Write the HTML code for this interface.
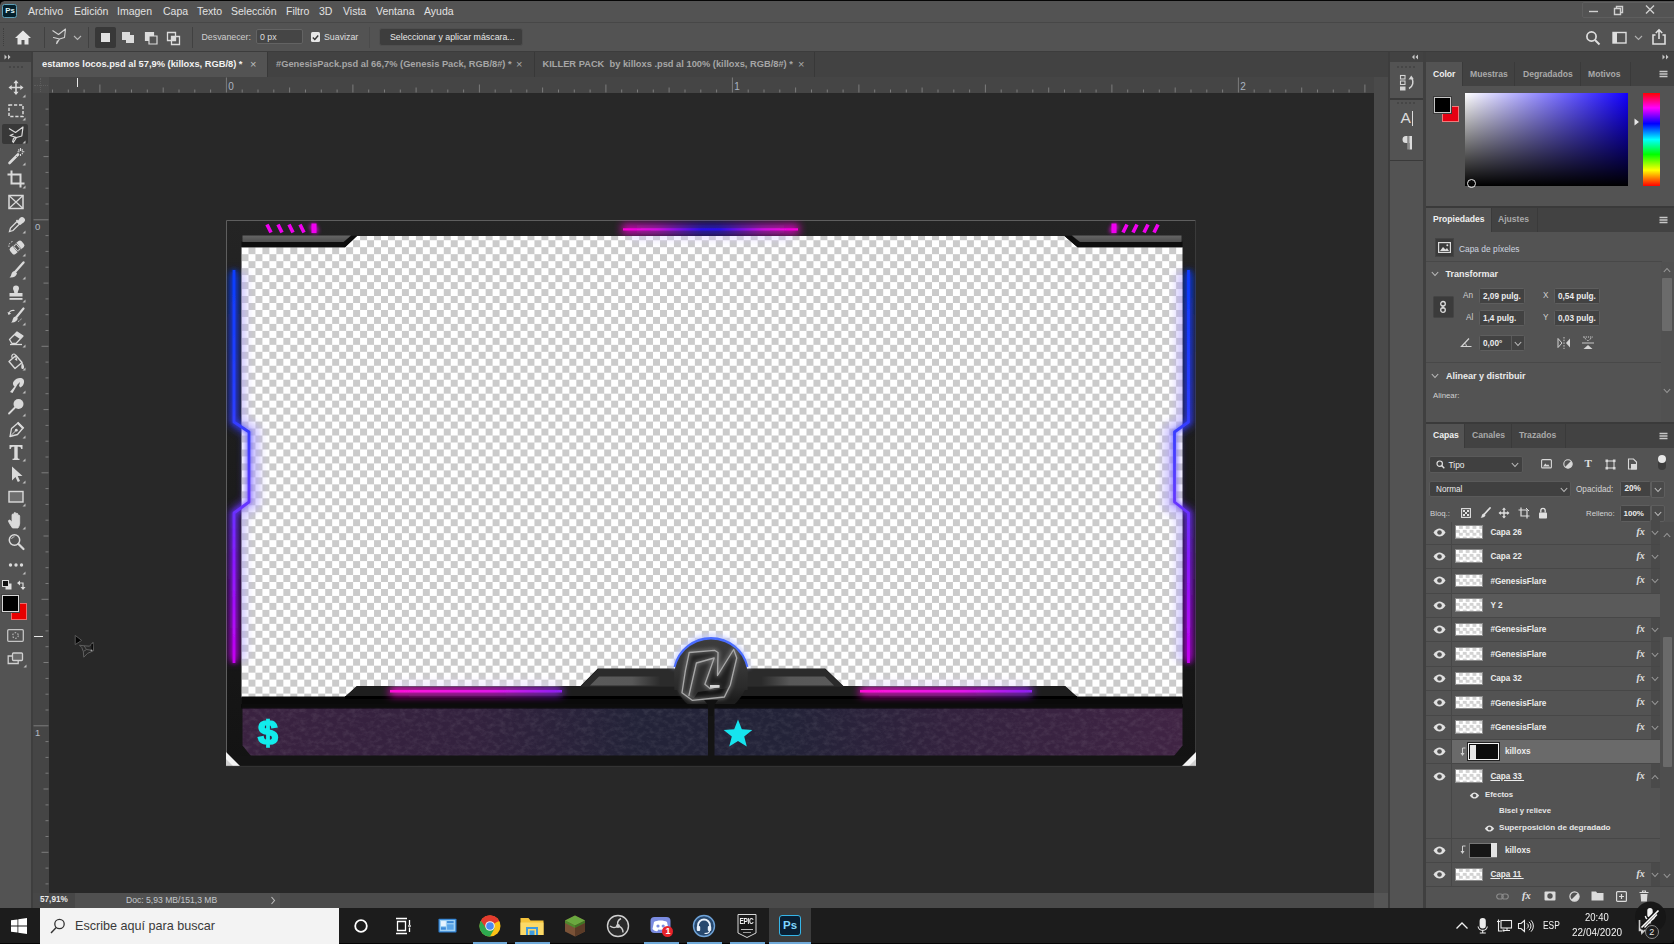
<!DOCTYPE html>
<html lang="es"><head><meta charset="utf-8"><title>Photoshop</title>
<style>
*{box-sizing:border-box;margin:0;padding:0}
html,body{width:1674px;height:944px;overflow:hidden;background:#535353;font-family:"Liberation Sans",sans-serif;color:#d8d8d8;font-size:10px}
.a{position:absolute}
.t{position:absolute;white-space:nowrap;line-height:1;transform-origin:0 0}
.b{font-weight:bold}
svg{position:absolute;overflow:visible}
#root{position:absolute;left:0;top:0;width:1674px;height:944px;overflow:hidden;background:#535353}
</style></head>
<body><div id="root">
<div class="a" style="left:0px;top:0px;width:1674px;height:23px;background:#535353;"></div>
<div class="a" style="left:0px;top:0px;width:1674px;height:1.2px;background:#050505;"></div>
<div class="a" style="left:0;top:1px;width:4px;height:4px;background:radial-gradient(circle at 100% 100%,rgba(0,0,0,0) 3.300px,#050505 4px)"></div>
<div class="a" style="left:0px;top:22px;width:1674px;height:1px;background:#474747;"></div>
<div class="a" style="left:2px;top:3.800px;width:14.500px;height:14.500px;background:#04202c;border:1.300px solid #5fa0b8;border-radius:2.500px"></div>
<div class="t" style="left:5.2px;top:7.3px;font-size:7.8px;color:#dff6fb;font-weight:bold;">Ps</div>
<div class="t" style="left:28px;top:6.4px;font-size:10.5px;color:#e2e2e2;">Archivo</div>
<div class="t" style="left:74px;top:6.4px;font-size:10.5px;color:#e2e2e2;">Edición</div>
<div class="t" style="left:117px;top:6.4px;font-size:10.5px;color:#e2e2e2;">Imagen</div>
<div class="t" style="left:163px;top:6.4px;font-size:10.5px;color:#e2e2e2;">Capa</div>
<div class="t" style="left:197px;top:6.4px;font-size:10.5px;color:#e2e2e2;">Texto</div>
<div class="t" style="left:231px;top:6.4px;font-size:10.5px;color:#e2e2e2;">Selección</div>
<div class="t" style="left:286px;top:6.4px;font-size:10.5px;color:#e2e2e2;">Filtro</div>
<div class="t" style="left:319px;top:6.4px;font-size:10.5px;color:#e2e2e2;">3D</div>
<div class="t" style="left:343px;top:6.4px;font-size:10.5px;color:#e2e2e2;">Vista</div>
<div class="t" style="left:376px;top:6.4px;font-size:10.5px;color:#e2e2e2;">Ventana</div>
<div class="t" style="left:424px;top:6.4px;font-size:10.5px;color:#e2e2e2;">Ayuda</div>
<svg style="left:1580px;top:0" width="94" height="22" viewBox="0 0 94 22"><g stroke="#d0d0d0" stroke-width="1.4" fill="none"><path d="M9 11.5h9"/><path d="M34.5 8.5h6v6h-6z"/><path d="M36.5 8.5v-2h6v6h-2"/><path d="M66 5.5l8 8M74 5.5l-8 8"/></g></svg>
<div class="a" style="left:1582px;top:2px;width:93px;height:16px;border:1px solid #5e5e5e;border-radius:2px"></div>
<div class="a" style="left:0px;top:23px;width:1674px;height:29px;background:#535353;"></div>
<div class="a" style="left:0px;top:51px;width:1674px;height:1px;background:#3c3c3c;"></div>
<div class="a" style="left:3px;top:28px;width:1px;height:18px;border-left:1px dotted #3e3e3e"></div>
<svg style="left:14px;top:29px" width="18" height="17" viewBox="0 0 18 17"><path d="M9 1.5L1 9h2.5v6.5h4v-4.5h3v4.5h4V9H17z" fill="#e6e6e6"/></svg>
<div class="a" style="left:44px;top:27px;width:1px;height:21px;background:#414141;"></div>
<svg style="left:51px;top:28px" width="17" height="18" viewBox="0 0 17 18"><path d="M1.5 2.5l6 4 7-5.5-1 8.5-5 1.5-3 5M8.5 11l-6-1.500z M5.5 16l1-3.500" fill="none" stroke="#d4d4d4" stroke-width="1.1" stroke-linejoin="round"/></svg>
<svg style="left:73px;top:35px" width="9" height="6" viewBox="0 0 9 6"><path d="M1 1l3.500 3.500L8 1" fill="none" stroke="#b8b8b8" stroke-width="1.1"/></svg>
<div class="a" style="left:88px;top:27px;width:1px;height:21px;background:#414141;"></div>
<div class="a" style="left:95px;top:27px;width:21px;height:21px;background:#383838;border-radius:2px;"></div>
<div class="a" style="left:101px;top:33px;width:9px;height:9px;background:#e2e2e2;"></div>
<svg style="left:121px;top:31px" width="15" height="14" viewBox="0 0 15 14"><path d="M1 1h8v3h4v8H5V9H1z" fill="#dcdcdc"/></svg>
<svg style="left:144px;top:31px" width="15" height="14" viewBox="0 0 15 14"><path d="M1.500 1.500h8v8h-8z" fill="none" stroke="#dcdcdc" stroke-width="1.2"/><path d="M5 5h8v8H5z" fill="#535353" stroke="#dcdcdc" stroke-width="1.200"/><path d="M2 2h7v3H5v4H2z" fill="#dcdcdc"/></svg>
<svg style="left:166px;top:31px" width="15" height="14" viewBox="0 0 15 14"><path d="M1.500 1.500h8v8h-8z M5.500 5.500h8v8h-8z" fill="none" stroke="#dcdcdc" stroke-width="1.300"/><path d="M5.500 5.500h4v4h-4z" fill="#dcdcdc"/></svg>
<div class="a" style="left:192px;top:27px;width:1px;height:21px;background:#414141;"></div>
<div class="t" style="left:201.5px;top:33px;font-size:8.8px;color:#cfcfcf;">Desvanecer:</div>
<div class="a" style="left:256px;top:29px;width:47px;height:15px;background:#454545;border:1px solid #636363;border-radius:2px"></div>
<div class="t" style="left:260px;top:33px;font-size:8.8px;color:#dedede;">0 px</div>
<div class="a" style="left:310.500px;top:32px;width:9.500px;height:9.500px;background:#e6e6e6;border-radius:1.500px"></div>
<svg style="left:311px;top:32.500px" width="9" height="9" viewBox="0 0 9 9"><path d="M1.800 4.500l2 2 3.400-4" fill="none" stroke="#333" stroke-width="1.400"/></svg>
<div class="t" style="left:324px;top:33px;font-size:8.8px;color:#dedede;">Suavizar</div>
<div class="a" style="left:369px;top:27px;width:1px;height:21px;background:#4b4b4b;"></div>
<div class="a" style="left:379px;top:27.500px;width:144px;height:18px;background:#3d3d3d;border:1px solid #4e4e4e;border-radius:3px"></div>
<div class="t" style="left:390px;top:33px;font-size:8.8px;color:#e8e8e8;">Seleccionar y aplicar máscara...</div>
<svg style="left:1585px;top:30px" width="16" height="16" viewBox="0 0 16 16"><circle cx="6.500" cy="6.500" r="4.600" fill="none" stroke="#dedede" stroke-width="1.700"/><path d="M10 10l4.500 4.500" stroke="#dedede" stroke-width="2"/></svg>
<svg style="left:1612px;top:31px" width="16" height="14" viewBox="0 0 16 14"><rect x="1" y="1.500" width="13" height="10.500" fill="none" stroke="#dedede" stroke-width="1.400"/><rect x="1" y="1.500" width="4" height="10.500" fill="#dedede"/></svg>
<svg style="left:1634px;top:35px" width="9" height="6" viewBox="0 0 9 6"><path d="M1 1l3.500 3.500L8 1" fill="none" stroke="#b0b0b0" stroke-width="1.100"/></svg>
<svg style="left:1651px;top:28px" width="16" height="18" viewBox="0 0 16 18"><path d="M4.500 7H2v9h12V7h-2.500" fill="none" stroke="#dedede" stroke-width="1.600"/><path d="M8 11V2M4.800 5L8 1.800 11.200 5" fill="none" stroke="#dedede" stroke-width="1.600"/></svg>
<div class="a" style="left:0px;top:52px;width:1390px;height:25px;background:#424242;"></div>
<div class="a" style="left:33px;top:52px;width:234px;height:25px;background:#535353;"></div>
<div class="t" style="left:42px;top:60.3px;font-size:9.3px;color:#f2f2f2;font-weight:bold;">estamos locos.psd al 57,9% (killoxs, RGB/8) *</div>
<div class="t" style="left:250px;top:59.3px;font-size:11px;color:#bdbdbd;">×</div>
<div class="a" style="left:267px;top:52px;width:1px;height:25px;background:#383838;"></div>
<div class="t" style="left:276px;top:60.3px;font-size:9.3px;color:#a6a6a6;font-weight:bold;">#GenesisPack.psd al 66,7% (Genesis Pack, RGB/8#) *</div>
<div class="t" style="left:516px;top:59.3px;font-size:11px;color:#a8a8a8;">×</div>
<div class="a" style="left:533.5px;top:52px;width:1px;height:25px;background:#383838;"></div>
<div class="t" style="left:542.5px;top:60.3px;font-size:9.3px;color:#a6a6a6;font-weight:bold;">KILLER PACK&nbsp; by killoxs .psd al 100% (killoxs, RGB/8#) *</div>
<div class="t" style="left:798px;top:59.3px;font-size:11px;color:#a8a8a8;">×</div>
<div class="a" style="left:814px;top:52px;width:1px;height:25px;background:#383838;"></div>
<div class="a" style="left:33px;top:77px;width:1341px;height:16px;background:#454545;"></div>
<div class="a" style="left:33px;top:93px;width:16px;height:800px;background:#454545;"></div>
<div class="a" style="left:33px;top:77px;width:16px;height:16px;background:#4b4b4b;"></div>
<div class="a" style="left:40px;top:78px;width:1px;height:14px;border-left:1px dotted #5c5c5c"></div>
<div class="a" style="left:34px;top:85px;width:14px;height:1px;border-top:1px dotted #5c5c5c"></div>
<svg style="left:0;top:0" width="1674" height="944" viewBox="0 0 1674 944"><g stroke="#7c7c7c" stroke-width="1"><path d="M52.5 89.5V92.5"/><path d="M68.3 89.5V92.5"/><path d="M84.1 89.5V92.5"/><path d="M99.9 84.5V92.5"/><path d="M115.7 89.5V92.5"/><path d="M131.5 89.5V92.5"/><path d="M147.3 89.5V92.5"/><path d="M163.2 87.5V92.5"/><path d="M179.0 89.5V92.5"/><path d="M194.8 89.5V92.5"/><path d="M210.6 89.5V92.5"/><path d="M226.4 77.5V92.5"/><path d="M242.2 89.5V92.5"/><path d="M258.0 89.5V92.5"/><path d="M273.8 89.5V92.5"/><path d="M289.6 87.5V92.5"/><path d="M305.5 89.5V92.5"/><path d="M321.3 89.5V92.5"/><path d="M337.1 89.5V92.5"/><path d="M352.9 84.5V92.5"/><path d="M368.7 89.5V92.5"/><path d="M384.5 89.5V92.5"/><path d="M400.3 89.5V92.5"/><path d="M416.1 87.5V92.5"/><path d="M432.0 89.5V92.5"/><path d="M447.8 89.5V92.5"/><path d="M463.6 89.5V92.5"/><path d="M479.4 84.5V92.5"/><path d="M495.2 89.5V92.5"/><path d="M511.0 89.5V92.5"/><path d="M526.8 89.5V92.5"/><path d="M542.6 87.5V92.5"/><path d="M558.5 89.5V92.5"/><path d="M574.3 89.5V92.5"/><path d="M590.1 89.5V92.5"/><path d="M605.9 84.5V92.5"/><path d="M621.7 89.5V92.5"/><path d="M637.5 89.5V92.5"/><path d="M653.3 89.5V92.5"/><path d="M669.1 87.5V92.5"/><path d="M685.0 89.5V92.5"/><path d="M700.8 89.5V92.5"/><path d="M716.6 89.5V92.5"/><path d="M732.4 77.5V92.5"/><path d="M748.2 89.5V92.5"/><path d="M764.0 89.5V92.5"/><path d="M779.8 89.5V92.5"/><path d="M795.6 87.5V92.5"/><path d="M811.5 89.5V92.5"/><path d="M827.3 89.5V92.5"/><path d="M843.1 89.5V92.5"/><path d="M858.9 84.5V92.5"/><path d="M874.7 89.5V92.5"/><path d="M890.5 89.5V92.5"/><path d="M906.3 89.5V92.5"/><path d="M922.1 87.5V92.5"/><path d="M938.0 89.5V92.5"/><path d="M953.8 89.5V92.5"/><path d="M969.6 89.5V92.5"/><path d="M985.4 84.5V92.5"/><path d="M1001.2 89.5V92.5"/><path d="M1017.0 89.5V92.5"/><path d="M1032.8 89.5V92.5"/><path d="M1048.7 87.5V92.5"/><path d="M1064.5 89.5V92.5"/><path d="M1080.3 89.5V92.5"/><path d="M1096.1 89.5V92.5"/><path d="M1111.9 84.5V92.5"/><path d="M1127.7 89.5V92.5"/><path d="M1143.5 89.5V92.5"/><path d="M1159.3 89.5V92.5"/><path d="M1175.2 87.5V92.5"/><path d="M1191.0 89.5V92.5"/><path d="M1206.8 89.5V92.5"/><path d="M1222.6 89.5V92.5"/><path d="M1238.4 77.5V92.5"/><path d="M1254.2 89.5V92.5"/><path d="M1270.0 89.5V92.5"/><path d="M1285.8 89.5V92.5"/><path d="M1301.7 87.5V92.5"/><path d="M1317.5 89.5V92.5"/><path d="M1333.3 89.5V92.5"/><path d="M1349.1 89.5V92.5"/><path d="M1364.9 84.5V92.5"/><path d="M45.5 109.1H48.5"/><path d="M45.5 124.9H48.5"/><path d="M45.5 140.7H48.5"/><path d="M43.5 156.6H48.5"/><path d="M45.5 172.4H48.5"/><path d="M45.5 188.2H48.5"/><path d="M45.5 204.0H48.5"/><path d="M33.5 219.8H48.5"/><path d="M45.5 235.6H48.5"/><path d="M45.5 251.4H48.5"/><path d="M45.5 267.2H48.5"/><path d="M43.5 283.1H48.5"/><path d="M45.5 298.9H48.5"/><path d="M45.5 314.7H48.5"/><path d="M45.5 330.5H48.5"/><path d="M41.5 346.3H48.5"/><path d="M45.5 362.1H48.5"/><path d="M45.5 377.9H48.5"/><path d="M45.5 393.7H48.5"/><path d="M43.5 409.6H48.5"/><path d="M45.5 425.4H48.5"/><path d="M45.5 441.2H48.5"/><path d="M45.5 457.0H48.5"/><path d="M41.5 472.8H48.5"/><path d="M45.5 488.6H48.5"/><path d="M45.5 504.4H48.5"/><path d="M45.5 520.2H48.5"/><path d="M43.5 536.0H48.5"/><path d="M45.5 551.9H48.5"/><path d="M45.5 567.7H48.5"/><path d="M45.5 583.5H48.5"/><path d="M41.5 599.3H48.5"/><path d="M45.5 615.1H48.5"/><path d="M45.5 630.9H48.5"/><path d="M45.5 646.7H48.5"/><path d="M43.5 662.5H48.5"/><path d="M45.5 678.4H48.5"/><path d="M45.5 694.2H48.5"/><path d="M45.5 710.0H48.5"/><path d="M33.5 725.8H48.5"/><path d="M45.5 741.6H48.5"/><path d="M45.5 757.4H48.5"/><path d="M45.5 773.2H48.5"/><path d="M43.5 789.0H48.5"/><path d="M45.5 804.9H48.5"/><path d="M45.5 820.7H48.5"/><path d="M45.5 836.5H48.5"/><path d="M41.5 852.3H48.5"/><path d="M45.5 868.1H48.5"/><path d="M45.5 883.9H48.5"/></g><path d="M77.500 78v9" stroke="#e8e8e8" stroke-width="1"/><path d="M34 636.500h9" stroke="#e8e8e8" stroke-width="1"/></svg>
<div class="t" style="left:228.2px;top:81.5px;font-size:10px;color:#aab4c0;">0</div>
<div class="t" style="left:734.2px;top:81.5px;font-size:10px;color:#aab4c0;">1</div>
<div class="t" style="left:1240.2px;top:81.5px;font-size:10px;color:#aab4c0;">2</div>
<div class="t" style="left:35px;top:221.5px;font-size:9.5px;color:#b4bcc6;">0</div>
<div class="t" style="left:35px;top:727.5px;font-size:9.5px;color:#b4bcc6;">1</div>
<div class="a" style="left:49px;top:93px;width:1325px;height:800px;background:#282828;"></div>
<div class="a" style="left:1374px;top:77px;width:14px;height:816px;background:#4a4a4a;"></div>
<div class="a" style="left:1387.5px;top:52px;width:2.5px;height:856px;background:#3d3d3d;"></div>
<div class="a" style="left:33px;top:893px;width:1355px;height:15px;background:#4a4a4a;"></div>
<div class="a" style="left:33px;top:893px;width:42px;height:15px;background:#474747;"></div>
<div class="t" style="left:40px;top:896.3px;font-size:8.2px;color:#e8e8e8;font-weight:bold;">57,91%</div>
<div class="a" style="left:75px;top:893px;width:205px;height:15px;background:#505050;"></div>
<div class="t" style="left:126px;top:896.3px;font-size:8.6px;color:#c4c8cc;">Doc: 5,93 MB/151,3 MB</div>
<svg style="left:270px;top:896px" width="6" height="9" viewBox="0 0 6 9"><path d="M1.500 1l3 3.500-3 3.500" fill="none" stroke="#bdbdbd" stroke-width="1.100"/></svg>
<div class="a" style="left:1374px;top:893px;width:14px;height:15px;background:#555555;"></div>
<div class="a" style="left:0px;top:52px;width:32px;height:856px;background:#535353;"></div>
<div class="a" style="left:0px;top:52px;width:32px;height:10px;background:#424242;"></div>
<div class="a" style="left:31px;top:52px;width:2px;height:856px;background:#3e3e3e;"></div>
<svg style="left:4px;top:54px" width="8" height="6" viewBox="0 0 8 6"><path d="M0.500 0.500L3 3 0.500 5.500zM4 0.500L6.500 3 4 5.500z" fill="#c8c8c8"/></svg>
<div class="a" style="left:9px;top:66px;width:14px;height:2px;border-top:2px dotted #454545"></div>
<div class="a" style="left:2px;top:123.5px;width:26px;height:20px;background:#383838;border-radius:2px;"></div>
<svg style="left:5.5px;top:78px" width="20" height="20" viewBox="0 0 20 20"><g fill="#dadada"><path d="M10 2l2.600 3.200h-1.800v3.500h3.500V6.900L17.500 9.500 14.300 12.100v-1.800h-3.500v3.500h1.800L10 17l-2.600-3.200h1.800v-3.500H5.700v1.800L2.500 9.500 5.700 6.900v1.800h3.500V5.200H7.400z"/></g><path d="M19.500 16.500v3h-3z" fill="#bdbdbd"/></svg>
<svg style="left:5.5px;top:100.5px" width="20" height="20" viewBox="0 0 20 20"><rect x="3" y="4" width="14" height="11.500" fill="none" stroke="#dadada" stroke-width="1.500" stroke-dasharray="3.200 1.800"/><path d="M19.500 16.500v3h-3z" fill="#bdbdbd"/></svg>
<svg style="left:5.5px;top:123.5px" width="20" height="20" viewBox="0 0 20 20"><path d="M3 4.500l6.500 4L17 3l-1.200 9-5.300 1.500-3.500 5.500M10.500 13.500l-6.500-2 3.500-1.500M6.500 18l1-3.500 2-1" fill="none" stroke="#dadada" stroke-width="1.200" stroke-linejoin="round"/><path d="M19.500 16.500v3h-3z" fill="#bdbdbd"/></svg>
<svg style="left:5.5px;top:146px" width="20" height="20" viewBox="0 0 20 20"><path d="M3.500 17l8.500-8.500" stroke="#dadada" stroke-width="2.600" stroke-linecap="round"/><path d="M10.300 10.200l1.500 1.500" stroke="#535353" stroke-width="0.800"/><g stroke="#dadada" stroke-width="1.100"><path d="M14.500 2v3M14.500 8v2M11.500 5.800h2M15.800 5.800h2.500M12.300 3.500l1 1M16.700 3.500l-1 1M16.700 8l-0.800-0.800"/></g><path d="M19.500 16.500v3h-3z" fill="#bdbdbd"/></svg>
<svg style="left:5.5px;top:168.5px" width="20" height="20" viewBox="0 0 20 20"><path d="M5.500 1.500v13h13M1.500 5.500h13v13" fill="none" stroke="#dadada" stroke-width="2"/><path d="M19.500 16.500v3h-3z" fill="#bdbdbd"/></svg>
<svg style="left:5.5px;top:191.5px" width="20" height="20" viewBox="0 0 20 20"><rect x="3" y="3.500" width="14" height="13" fill="none" stroke="#dadada" stroke-width="1.500"/><path d="M3 3.500l14 13M17 3.500l-14 13" stroke="#dadada" stroke-width="1.200"/></svg>
<svg style="left:5.5px;top:214px" width="20" height="20" viewBox="0 0 20 20"><path d="M3.500 17.500l1-3.500 6.500-6.500 2.500 2.500-6.500 6.500z" fill="none" stroke="#dadada" stroke-width="1.300"/><path d="M10.500 6l4.500 4.500M12 8l2.500-3.500a2 2 0 0 1 3 3l-3.500 2.500z" fill="#dadada" stroke="#dadada" stroke-width="1.600" stroke-linejoin="round"/><path d="M19.500 16.500v3h-3z" fill="#bdbdbd"/></svg>
<svg style="left:5.5px;top:237px" width="20" height="20" viewBox="0 0 20 20"><g transform="rotate(-40 11 10.500)"><rect x="3.500" y="6.500" width="15" height="8" rx="2.200" fill="#dadada"/><rect x="8.500" y="6.500" width="5" height="8" fill="#535353"/><rect x="9.300" y="7.500" width="3.400" height="6" fill="none" stroke="#dadada" stroke-width="0.900"/></g><path d="M3 10a4.500 4.500 0 0 1 4-5.500" fill="none" stroke="#dadada" stroke-width="1" stroke-dasharray="1.500 1.200"/><path d="M19.500 16.500v3h-3z" fill="#bdbdbd"/></svg>
<svg style="left:5.5px;top:260px" width="20" height="20" viewBox="0 0 20 20"><path d="M17.500 2.500L9.500 11.500" stroke="#dadada" stroke-width="2.400" stroke-linecap="round"/><path d="M8.800 11l2.200 2.200c-0.500 2.800-3.500 4.800-7.500 4.300 1.800-1 1.500-3 2.300-4.500 0.700-1.300 1.800-1.900 3-2z" fill="#dadada"/><path d="M19.500 16.500v3h-3z" fill="#bdbdbd"/></svg>
<svg style="left:5.5px;top:282.5px" width="20" height="20" viewBox="0 0 20 20"><path d="M10 2.500a3 3 0 0 1 3 3c0 1.500-1.300 2.500-1.300 4.500h4.800v3.500h-13V10h4.800c0-2-1.300-3-1.300-4.500a3 3 0 0 1 3-3z" fill="#dadada"/><rect x="3.500" y="15" width="13" height="1.800" fill="#dadada"/><path d="M19.500 16.500v3h-3z" fill="#bdbdbd"/></svg>
<svg style="left:5.5px;top:305.5px" width="20" height="20" viewBox="0 0 20 20"><path d="M17.500 2.500L10.500 11" stroke="#dadada" stroke-width="2.200" stroke-linecap="round"/><path d="M9.800 10.500l2 2c-0.500 2.600-3 4.300-6.800 3.900 1.600-0.900 1.400-2.700 2.100-4 0.600-1.200 1.600-1.800 2.700-1.900z" fill="#dadada"/><path d="M2.500 8a5 5 0 0 1 6-3.500" fill="none" stroke="#dadada" stroke-width="1.200"/><path d="M1.500 6l1 3 2.700-1.500z" fill="#dadada"/><path d="M12 15.500a5 5 0 0 0 3.500-3.500" fill="none" stroke="#dadada" stroke-width="1" stroke-dasharray="1.300 1"/><path d="M19.500 16.500v3h-3z" fill="#bdbdbd"/></svg>
<svg style="left:5.5px;top:328px" width="20" height="20" viewBox="0 0 20 20"><path d="M3.500 11.500l7.500-7.500 6 4-7 7.500h-4z" fill="none" stroke="#dadada" stroke-width="1.300" stroke-linejoin="round"/><path d="M8 7l6 4 3-3-6-4z" fill="#dadada"/><path d="M4 16.500h12" stroke="#dadada" stroke-width="1.300"/><path d="M19.500 16.500v3h-3z" fill="#bdbdbd"/></svg>
<svg style="left:5.5px;top:350.5px" width="20" height="20" viewBox="0 0 20 20"><path d="M3 10.500l7-6 6 7-7 6z" fill="none" stroke="#dadada" stroke-width="1.400" stroke-linejoin="round"/><path d="M6.500 7.500c-2-3 1-6 3-3.500l1 5" fill="none" stroke="#dadada" stroke-width="1.100"/><path d="M8.500 8.500l2.800 1.400-0.300-3z" fill="#dadada"/><path d="M15.500 11c1.500 1.500 3 4 2.500 6-0.500 1.500-2.500 1.300-2.700-0.300-0.200-1.500 0.500-3 0.200-5.700z" fill="#dadada"/><path d="M19.500 16.500v3h-3z" fill="#bdbdbd"/></svg>
<svg style="left:5.5px;top:373.5px" width="20" height="20" viewBox="0 0 20 20"><path d="M4 18l4.500-5.500c-2-1.500-2-4-0.500-5.500 1.500-1.800 3.500-3 6-3 3 0 4.500 2 4 4.500-0.300 2-1.500 4-3.500 5l-1.500-1.500 1-4-2.500 2.500-5 8.500z" fill="#dadada"/><path d="M19.500 16.500v3h-3z" fill="#bdbdbd"/></svg>
<svg style="left:5.5px;top:396.5px" width="20" height="20" viewBox="0 0 20 20"><circle cx="12.500" cy="7" r="5" fill="#dadada"/><path d="M9 10.500l-6 6" stroke="#dadada" stroke-width="1.800" stroke-linecap="round"/><path d="M19.500 16.500v3h-3z" fill="#bdbdbd"/></svg>
<svg style="left:5.5px;top:419px" width="20" height="20" viewBox="0 0 20 20"><path d="M4 17.500l1.500-8L12 4l5 5-5.500 6.500z" fill="none" stroke="#dadada" stroke-width="1.300" stroke-linejoin="round"/><path d="M4 17.500l5.500-5.500" stroke="#dadada" stroke-width="1"/><circle cx="10.300" cy="11.200" r="1.400" fill="#dadada"/><path d="M11.500 3.500l6 6" stroke="#dadada" stroke-width="2.200"/><path d="M19.500 16.500v3h-3z" fill="#bdbdbd"/></svg>
<svg style="left:5.5px;top:441.5px" width="20" height="20" viewBox="0 0 20 20"><path d="M3.500 3h13v4h-1.300c-0.200-1.500-0.800-2.200-2.200-2.200h-1.300v10.700c0 1 0.500 1.300 1.800 1.300V18h-7v-1.200c1.300 0 1.800-0.300 1.800-1.300V4.800H7c-1.400 0-2 0.700-2.200 2.200H3.500z" fill="#dadada"/><path d="M19.500 16.500v3h-3z" fill="#bdbdbd"/></svg>
<svg style="left:5.5px;top:464px" width="20" height="20" viewBox="0 0 20 20"><path d="M6 2.500v14l3.500-3.500 2.300 5 2.200-1-2.300-5h4.800z" fill="#dadada"/><path d="M19.500 16.500v3h-3z" fill="#bdbdbd"/></svg>
<svg style="left:5.5px;top:486.5px" width="20" height="20" viewBox="0 0 20 20"><rect x="3" y="4.500" width="14" height="10.500" fill="#6e6e6e" stroke="#dadada" stroke-width="1.400"/><path d="M19.500 16.500v3h-3z" fill="#bdbdbd"/></svg>
<svg style="left:5.5px;top:509.5px" width="20" height="20" viewBox="0 0 20 20"><path d="M6.500 18c-1.500-2-3-4.500-4-6.500-0.500-1.200 1-2 2-1l1.500 1.800V5c0-1.300 1.800-1.300 1.900 0V9.500 3.500c0-1.300 1.900-1.300 2 0v6-5.300c0-1.300 1.900-1.300 2 0V9.800 6c0-1.200 1.700-1.200 1.800 0v7c0 2-0.800 3.500-1.700 5z" fill="#dadada" stroke="#dadada" stroke-width="0.800" stroke-linejoin="round"/><path d="M19.500 16.500v3h-3z" fill="#bdbdbd"/></svg>
<svg style="left:5.5px;top:531.5px" width="20" height="20" viewBox="0 0 20 20"><circle cx="8.500" cy="8" r="5.200" fill="none" stroke="#dadada" stroke-width="1.500"/><path d="M12.500 12l5 5" stroke="#dadada" stroke-width="2.200" stroke-linecap="round"/><path d="M5.500 7a3.200 3.200 0 0 1 3-2.300" fill="none" stroke="#dadada" stroke-width="0.800"/></svg>
<svg style="left:5.5px;top:554.5px" width="20" height="20" viewBox="0 0 20 20"><circle cx="4.500" cy="10" r="1.700" fill="#dadada"/><circle cx="10" cy="10" r="1.700" fill="#dadada"/><circle cx="15.500" cy="10" r="1.700" fill="#dadada"/><path d="M19.500 16.500v3h-3z" fill="#bdbdbd"/></svg>
<svg style="left:2px;top:580px" width="10" height="10" viewBox="0 0 10 10"><rect x="3.500" y="3.500" width="6" height="6" fill="#e0e0e0"/><rect x="0.500" y="0.500" width="6" height="6" fill="#111" stroke="#dcdcdc" stroke-width="1"/></svg>
<svg style="left:17px;top:580px" width="10" height="10" viewBox="0 0 10 10"><path d="M1 3h5v5" fill="none" stroke="#dcdcdc" stroke-width="1.200"/><path d="M0 3l3-2.500v5zM6 10l-2.500-3h5z" fill="#dcdcdc"/></svg>
<div class="a" style="left:11px;top:603px;width:16px;height:17px;background:#e80000;border:1px solid #ee6a6a"></div>
<div class="a" style="left:2px;top:595px;width:16.500px;height:16.500px;background:#000;border:1px solid #d8d8d8;box-shadow:0 0 0 1px #444"></div>
<svg style="left:7px;top:629px" width="17" height="13" viewBox="0 0 17 13"><rect x="0.700" y="0.700" width="15.600" height="11.600" rx="1" fill="none" stroke="#c4c4c4" stroke-width="1.300"/><circle cx="8.500" cy="6.500" r="2.800" fill="none" stroke="#b0b0b0" stroke-width="1.200" stroke-dasharray="1.600 1.400"/></svg>
<svg style="left:7px;top:652px" width="20" height="16" viewBox="0 0 20 16"><rect x="5.500" y="1" width="10" height="7.500" rx="1" fill="#6a6a6a" stroke="#d0d0d0" stroke-width="1.300"/><path d="M5.500 4H1.200v7.500h10V8.500" fill="none" stroke="#d0d0d0" stroke-width="1.300"/><path d="M19.500 12.500v3h-3z" fill="#bdbdbd"/></svg>
<svg style="left:0;top:0" width="1674" height="944" viewBox="0 0 1674 944"><defs><pattern id="ck" x="241.500" y="247.200" width="13.95" height="13.95" patternUnits="userSpaceOnUse"><rect width="13.95" height="13.95" fill="#fff"/><rect x="6.975" width="6.975" height="6.975" fill="#cbcbcb"/><rect y="6.975" width="6.975" height="6.975" fill="#cbcbcb"/></pattern><filter id="b1" filterUnits="userSpaceOnUse" x="200" y="200" width="1020" height="590"><feGaussianBlur stdDeviation="0.600"/></filter><filter id="b2" filterUnits="userSpaceOnUse" x="200" y="200" width="1020" height="590"><feGaussianBlur stdDeviation="2"/></filter><filter id="b3" filterUnits="userSpaceOnUse" x="200" y="200" width="1020" height="590"><feGaussianBlur stdDeviation="4"/></filter><filter id="b6" filterUnits="userSpaceOnUse" x="200" y="200" width="1020" height="590"><feGaussianBlur stdDeviation="7"/></filter><filter id="soft" filterUnits="userSpaceOnUse" x="200" y="200" width="1020" height="590"><feGaussianBlur stdDeviation="0.700"/></filter><linearGradient id="gv" x1="0" y1="270" x2="0" y2="662" gradientUnits="userSpaceOnUse"><stop offset="0" stop-color="#0a3cff"/><stop offset="0.350" stop-color="#2a3cff"/><stop offset="0.550" stop-color="#5a3cff"/><stop offset="0.750" stop-color="#8a18ff"/><stop offset="1" stop-color="#c400f0"/></linearGradient><linearGradient id="gt" x1="622" y1="0" x2="799" y2="0" gradientUnits="userSpaceOnUse"><stop offset="0" stop-color="#ff00d8"/><stop offset="0.200" stop-color="#d010e0"/><stop offset="0.450" stop-color="#2a10e8"/><stop offset="0.550" stop-color="#2a10e8"/><stop offset="0.800" stop-color="#d010e0"/><stop offset="1" stop-color="#ff00d8"/></linearGradient><linearGradient id="gbl" x1="390" y1="0" x2="562" y2="0" gradientUnits="userSpaceOnUse"><stop offset="0" stop-color="#ff10d8"/><stop offset="0.600" stop-color="#e018e8"/><stop offset="1" stop-color="#8a20f0"/></linearGradient><linearGradient id="gbr" x1="860" y1="0" x2="1032" y2="0" gradientUnits="userSpaceOnUse"><stop offset="0" stop-color="#ff10d8"/><stop offset="0.600" stop-color="#e018e8"/><stop offset="1" stop-color="#8a20f0"/></linearGradient><linearGradient id="gtex" x1="242" y1="0" x2="1182" y2="0" gradientUnits="userSpaceOnUse"><stop offset="0" stop-color="#3a2240"/><stop offset="0.250" stop-color="#33223e"/><stop offset="0.420" stop-color="#232338"/><stop offset="0.580" stop-color="#232338"/><stop offset="0.750" stop-color="#33223e"/><stop offset="1" stop-color="#402444"/></linearGradient><linearGradient id="gstripL" x1="590" y1="0" x2="660" y2="0" gradientUnits="userSpaceOnUse"><stop offset="0" stop-color="#5a5a5a"/><stop offset="0.600" stop-color="#585858"/><stop offset="1" stop-color="#2c2c2c"/></linearGradient><linearGradient id="gstripR" x1="762" y1="0" x2="832" y2="0" gradientUnits="userSpaceOnUse"><stop offset="0" stop-color="#2c2c2c"/><stop offset="0.400" stop-color="#585858"/><stop offset="1" stop-color="#5a5a5a"/></linearGradient><linearGradient id="gbar" x1="0" y1="236" x2="0" y2="243" gradientUnits="userSpaceOnUse"><stop offset="0" stop-color="#646464"/><stop offset="1" stop-color="#4a4a4a"/></linearGradient><linearGradient id="gcirc" x1="0" y1="639" x2="0" y2="700" gradientUnits="userSpaceOnUse"><stop offset="0" stop-color="#3c3c3c"/><stop offset="0.450" stop-color="#363636"/><stop offset="0.800" stop-color="#2a2a2a"/><stop offset="1" stop-color="#1c1c1c"/></linearGradient><filter id="noise" x="0" y="0" width="100%" height="100%"><feTurbulence type="fractalNoise" baseFrequency="0.160 0.220" numOctaves="4" seed="7" result="n"/><feColorMatrix in="n" type="matrix" values="0 0 0 0 1  0 0 0 0 1  0 0 0 0 1  1.300 0 0 0 -0.520"/><feComposite operator="in" in2="SourceGraphic"/></filter><clipPath id="clipwin"><path d="M241.500 247.200H345L357 236H1064.500L1077.500 247.200H1182.500V697.500H1077L1065 686.500H843L825 669H598L581 686.500H357L345 697.500H241.500z"/></clipPath><linearGradient id="gframe" x1="0" y1="220" x2="0" y2="766" gradientUnits="userSpaceOnUse"><stop offset="0" stop-color="#242424"/><stop offset="0.500" stop-color="#1c1c1c"/><stop offset="1" stop-color="#131313"/></linearGradient><clipPath id="cwin"><path d="M241.500 247.200H345L357 236H1064.500L1077.500 247.200H1182.500V686.500H241.500z"/></clipPath><clipPath id="cfr"><path clip-rule="evenodd" d="M226 220H1196V766H226zM241.500 247.200H345L357 236H1064.500L1077.500 247.200H1182.500V697.500H241.500z"/></clipPath><clipPath id="cbar"><rect x="241.500" y="686.500" width="941" height="21"/></clipPath></defs><rect x="226" y="220" width="970" height="546" fill="url(#gframe)"/><path d="M241.500 247.200H345L357 236H1064.500L1077.500 247.200H1182.500V697.500H241.500z" fill="url(#ck)" filter="url(#soft)"/><path d="M226.500 766V220.500H1195.500" fill="none" stroke="#5e5e5e" stroke-width="1"/><path d="M1195.500 221V766" fill="none" stroke="#3a3a3a" stroke-width="1"/><g filter="url(#b3)" clip-path="url(#cfr)"><path d="M234 272V422L249 432V502L234 513V661" fill="none" stroke="url(#gv)" stroke-width="8" opacity="0.800"/><path d="M1188.500 272V422L1174.500 431V505L1188.500 513V661" fill="none" stroke="url(#gv)" stroke-width="8" opacity="0.800"/></g><g filter="url(#b3)" clip-path="url(#cwin)" opacity="0.600"><path d="M238 272V422L252 432V502L238 513V661" fill="none" stroke="#b4a6ff" stroke-width="16"/><path d="M1184.500 272V422L1171.500 431V505L1184.500 513V661" fill="none" stroke="#b4a6ff" stroke-width="16"/></g><path d="M241.500 241.500H344L351 235.800H357.300L345 247.200H241.500z" fill="#0d0d0d"/><path d="M242.500 235.600H351L343.500 242H242.500z" fill="url(#gbar)"/><path d="M1182.500 241.500H1079L1071.500 235.800H1064.200L1077.500 247.200H1182.500z" fill="#0d0d0d"/><path d="M1181.500 235.600H1072L1080 242H1181.500z" fill="url(#gbar)"/><path d="M267 224.500L271 232.500" stroke="#f000f0" stroke-width="3.600" filter="url(#b1)"/><path d="M278 224.500L282 232.500" stroke="#f000f0" stroke-width="3.600" filter="url(#b1)"/><path d="M289 224.500L293 232.500" stroke="#f000f0" stroke-width="3.600" filter="url(#b1)"/><path d="M300 224.500L304 232.500" stroke="#f000f0" stroke-width="3.600" filter="url(#b1)"/><path d="M312 224.500L316 232.500" stroke="#ff00ff" stroke-width="6" filter="url(#b2)" opacity="0.900"/><path d="M314 223.500V233" stroke="#f000f0" stroke-width="5"/><path d="M1116 224.500L1112 232.500" stroke="#ff00ff" stroke-width="6" filter="url(#b2)" opacity="0.900"/><path d="M1114 223.500V233" stroke="#f000f0" stroke-width="5"/><path d="M1127 224.500L1123 232.500" stroke="#f000f0" stroke-width="3.600" filter="url(#b1)"/><path d="M1137 224.500L1133 232.500" stroke="#f000f0" stroke-width="3.600" filter="url(#b1)"/><path d="M1148 224.500L1144 232.500" stroke="#f000f0" stroke-width="3.600" filter="url(#b1)"/><path d="M1158 224.500L1154 232.500" stroke="#f000f0" stroke-width="3.600" filter="url(#b1)"/><path d="M622 229.300H799" stroke="url(#gt)" stroke-width="9" filter="url(#b3)" opacity="0.900" clip-path="url(#cfr)"/><path d="M623 229.300H798" stroke="url(#gt)" stroke-width="2.200" filter="url(#b1)"/><path d="M630 235H792" stroke="#d8ccff" stroke-width="9" filter="url(#b3)" opacity="0.600" clip-path="url(#cwin)"/><path d="M234 270V422L249 432V502L234 513V663" fill="none" stroke="url(#gv)" stroke-width="4.500" filter="url(#b2)" stroke-linejoin="round" opacity="0.600"/><path d="M234 270V422L249 432V502L234 513V663" fill="none" stroke="url(#gv)" stroke-width="2.800" filter="url(#b1)" stroke-linejoin="round"/><path d="M1188.5 270V422L1174.5 432V502L1188.5 513V663" fill="none" stroke="url(#gv)" stroke-width="4.500" filter="url(#b2)" stroke-linejoin="round" opacity="0.600"/><path d="M1188.5 270V422L1174.5 432V502L1188.5 513V663" fill="none" stroke="url(#gv)" stroke-width="2.800" filter="url(#b1)" stroke-linejoin="round"/><path d="M241.500 697.500H345L357 686.500H581L598 669H674.700A37 37 0 0 1 747.300 669H825L843 686.500H1065L1077 697.500H1182.500V706H241.500z" fill="#262626"/><path d="M345 697.500L357 686.500H581L598 669H674.700M747.300 669H825L843 686.500H1065L1077 697.500" fill="none" stroke="#1a1a1a" stroke-width="1.200"/><rect x="241.500" y="696.500" width="941" height="10" fill="#0a0a0a"/><path d="M357 686.500H1065L1077 697.500H345z" fill="#1e1e1e"/><path d="M345 697.500H1077" stroke="#050505" stroke-width="3" filter="url(#b1)"/><path d="M581 686.500L598 669H825L843 686.500z" fill="#2b2b2b"/><path d="M590 685.500L599 676.500H660V685.500z" fill="url(#gstripL)"/><path d="M834 685.500L825 676.500H762V685.500z" fill="url(#gstripR)"/><path d="M390 691.300H562" stroke="url(#gbl)" stroke-width="8" filter="url(#b3)" opacity="1" clip-path="url(#cbar)"/><path d="M390 691.300H562" stroke="url(#gbl)" stroke-width="2.400" filter="url(#b1)"/><path d="M860 691.300H1032" stroke="url(#gbr)" stroke-width="8" filter="url(#b3)" opacity="1" clip-path="url(#cbar)"/><path d="M860 691.300H1032" stroke="url(#gbr)" stroke-width="2.400" filter="url(#b1)"/><path d="M392 687H560" stroke="#e4d8ff" stroke-width="9" filter="url(#b3)" opacity="0.650" clip-path="url(#cwin)"/><path d="M862 687H1030" stroke="#e4d8ff" stroke-width="9" filter="url(#b3)" opacity="0.650" clip-path="url(#cwin)"/><path d="M674.500 668A37 37 0 0 1 747.500 668" fill="none" stroke="#c4ccff" stroke-width="6" filter="url(#b2)" opacity="0.800"/><path d="M675 667A37 37 0 0 1 747 667" fill="none" stroke="#4a6cff" stroke-width="3" filter="url(#b1)"/><circle cx="711" cy="676" r="36.600" fill="url(#gcirc)"/><path d="M674.400 669.500V690H747.600V669.500z" fill="url(#gcirc)"/><path d="M689.200 652.500L714.500 650.300L718 652.500L717.500 675.500L733.700 649.500L736.700 658L730.300 685L724.400 697L692.200 700.300L682 692.700L685.400 670.700z" fill="#1f1f1f" opacity="0.850"/><path d="M696.400 663L714.200 658L704.900 684.200L710 689L726 688L722 696L694 698.500L688.800 696z" fill="#333" opacity="0.800"/><path d="M694 698L698 692L727 688L723.500 696.500z" fill="#111" opacity="0.900"/><g fill="none" stroke="#c8c8c8" stroke-width="2.600" stroke-linejoin="round" filter="url(#b2)" opacity="0.550"><path d="M689.200 652.500L714.500 650.300L718 652.500L717.500 675.500L733.700 649.500L736.700 658L730.300 685L724.400 697L692.200 700.300L682 692.700L685.400 670.700z"/><path d="M688.800 696L696.400 663L714.200 658L704.900 684.200L710 688.500L719.300 686"/></g><g fill="none" stroke="#a8a8a8" stroke-width="1.300" stroke-linejoin="round" filter="url(#b1)"><path d="M689.200 652.500L714.500 650.300L718 652.500L717.500 675.500L733.700 649.500L736.700 658L730.300 685L724.400 697L692.200 700.300L682 692.700L685.400 670.700z"/><path d="M688.800 696L696.400 663L714.200 658L704.900 684.200L710 688.500L719.300 686"/></g><rect x="710" y="685" width="9.500" height="2.800" fill="#d4d4d4" filter="url(#b1)"/><path d="M242.500 707.500H708.500V756H251L242.500 745.500z" fill="url(#gtex)"/><path d="M242.500 707.500H708.500V756H251L242.500 745.500z" fill="#fff" filter="url(#noise)" opacity="0.130"/><path d="M1182.500 707.500H714V756H1174L1182.500 745.500z" fill="url(#gtex)"/><path d="M1182.500 707.500H714V756H1174L1182.500 745.500z" fill="#fff" filter="url(#noise)" opacity="0.130"/><rect x="241.500" y="704" width="941" height="4.500" fill="#0a0a0a" filter="url(#b1)" opacity="0.900"/><rect x="708" y="700" width="6.500" height="57" fill="#141414"/><path d="M704 700C708 704 709.500 708 709.500 716H713C713 708 714.500 704 718 700z" fill="#111"/><rect x="227" y="755.500" width="968" height="10.500" fill="#141414"/><path d="M226 752V766H240z" fill="#f4f4f4"/><path d="M226 759V766H233z" fill="#d0d0d0"/><path d="M1196 752V766H1182z" fill="#f4f4f4"/><path d="M1196 759V766H1189z" fill="#d0d0d0"/><path d="M226 766.300H1196" stroke="#3a3a3a" stroke-width="0.800"/><path d="M738.0 719.5L741.8 729.2L752.3 729.9L744.2 736.5L746.8 746.6L738.0 741.0L729.2 746.6L731.8 736.5L723.7 729.9L734.2 729.2z" fill="#19e4ee" filter="url(#b1)"/><path d="M75.200 635.400V644.600L81.700 640.400z" fill="#050505" stroke="#585858" stroke-width="1"/><g fill="none" stroke="#606060" stroke-width="1" stroke-linejoin="round"><path d="M79.500 645.200L84 645.800L89.500 646.200L93 642.300L93.600 650.700L87.500 653.400L83.800 657.200L83.300 651.500L81.800 647.500z"/><path d="M84 645.800L86.500 649.500L91.500 650.300M86.500 649.500L83.300 651.500"/></g><path d="M92.300 644V650" stroke="#0a0a0a" stroke-width="1.600"/><circle cx="91.500" cy="650.300" r="0.900" fill="#a0a0a0"/></svg>
<div class="t" style="left:257.8px;top:715.7px;font-size:33px;color:#12ecec;font-weight:bold;font-family:'Liberation Sans',sans-serif;filter:blur(0.400px);-webkit-text-stroke:1.700px #12ecec;transform:scaleX(1.080);">$</div>
<div class="a" style="left:1390px;top:52px;width:33px;height:856px;background:#535353;"></div>
<div class="a" style="left:1390px;top:52px;width:284px;height:10px;background:#424242;"></div>
<svg style="left:1411px;top:54px" width="8" height="6" viewBox="0 0 8 6"><path d="M3.500 0.500L1 3l2.500 2.500zM7 0.500L4.500 3 7 5.500z" fill="#c8c8c8"/></svg>
<svg style="left:1662px;top:54px" width="8" height="6" viewBox="0 0 8 6"><path d="M0.500 0.500L3 3 0.500 5.500zM4 0.500L6.500 3 4 5.500z" fill="#c8c8c8"/></svg>
<div class="a" style="left:1390px;top:62px;width:33px;height:36px;background:#535353;"></div>
<div class="a" style="left:1390px;top:98px;width:33px;height:1.5px;background:#3a3a3a;"></div>
<div class="a" style="left:1390px;top:99.5px;width:33px;height:60px;background:#535353;"></div>
<div class="a" style="left:1390px;top:159.5px;width:33px;height:1.5px;background:#3a3a3a;"></div>
<div class="a" style="left:1390px;top:161px;width:33px;height:747px;background:#535353;"></div>
<div class="a" style="left:1423px;top:52px;width:2.5px;height:856px;background:#404040;"></div>
<div class="a" style="left:1397px;top:66px;width:18px;height:2px;border-top:2px dotted #464646"></div>
<div class="a" style="left:1397px;top:102px;width:18px;height:2px;border-top:2px dotted #464646"></div>
<svg style="left:1399px;top:74px" width="18" height="18" viewBox="0 0 18 18"><g fill="none" stroke="#d4d4d4" stroke-width="1.100"><rect x="1.500" y="1.500" width="4.500" height="3.500"/><rect x="1.500" y="7" width="4.500" height="3.500"/></g><rect x="1" y="12.500" width="5.500" height="4" fill="#d4d4d4"/><path d="M10 14.500c4-2 5-6.500 2.500-11" fill="none" stroke="#d4d4d4" stroke-width="1.500"/><path d="M9.500 5.500l2.800-4 2.500 3.800z" fill="#d4d4d4"/></svg>
<div class="t" style="left:1400.5px;top:110px;font-size:15.5px;color:#dcdcdc;">A</div>
<div class="a" style="left:1412px;top:110.5px;width:1.2px;height:15px;background:#dcdcdc;"></div>
<svg style="left:1401px;top:135px" width="12" height="15" viewBox="0 0 12 15"><path d="M5 1h6v13.500H8.500V8H5A3.500 3.500 0 0 1 5 1z" fill="#dcdcdc"/><rect x="6.200" y="1" width="2.300" height="13.500" fill="#8a8a8a"/></svg>
<div class="a" style="left:1425.5px;top:62px;width:248.5px;height:846px;background:#3a3a3a;"></div>
<div class="a" style="left:1425.5px;top:62px;width:248.5px;height:24.4px;background:#424242;"></div>
<div class="a" style="left:1425.5px;top:62px;width:36px;height:25.4px;background:#535353;"></div>
<div class="t" style="left:1433px;top:69.5px;font-size:8.6px;color:#f0f0f0;font-weight:bold;">Color</div>
<div class="t" style="left:1470px;top:69.5px;font-size:8.6px;color:#a9a9a9;font-weight:bold;">Muestras</div>
<div class="t" style="left:1523px;top:69.5px;font-size:8.6px;color:#a9a9a9;font-weight:bold;">Degradados</div>
<div class="t" style="left:1588px;top:69.5px;font-size:8.6px;color:#a9a9a9;font-weight:bold;">Motivos</div>
<svg style="left:1659px;top:70px" width="9" height="8" viewBox="0 0 9 8"><path d="M0.500 1.500h8M0.500 4h8M0.500 6.500h8" stroke="#c8c8c8" stroke-width="1.300"/></svg>
<div class="a" style="left:1461.5px;top:62px;width:1px;height:24px;background:#3a3a3a;"></div>
<div class="a" style="left:1514px;top:62px;width:1px;height:24px;background:#3a3a3a;"></div>
<div class="a" style="left:1580px;top:62px;width:1px;height:24px;background:#3a3a3a;"></div>
<div class="a" style="left:1630px;top:62px;width:1px;height:24px;background:#3a3a3a;"></div>
<div class="a" style="left:1425.5px;top:86px;width:248.5px;height:120px;background:#535353;"></div>
<div class="a" style="left:1441.500px;top:105.500px;width:17.500px;height:16px;background:#e60012;border:1px solid #f07a7a"></div>
<div class="a" style="left:1433.500px;top:96.500px;width:17px;height:16.500px;background:#000;border:1.300px solid #c4c4c4;outline:1px solid #3c3c3c"></div>
<div class="a" style="left:1465px;top:93px;width:163px;height:93px;background:linear-gradient(to bottom,rgba(0,0,0,0),#000),linear-gradient(to right,#fff,#1200ff)"></div>
<div class="a" style="left:1466.500px;top:179px;width:9px;height:9px;border:1.200px solid #e8e8e8;border-radius:50%"></div>
<div class="a" style="left:1643px;top:93px;width:17px;height:93px;background:linear-gradient(to bottom,#ff0000 0%,#ff00ff 16%,#0000ff 33%,#00ffff 50%,#00ff00 66%,#ffff00 83%,#ff0000 100%)"></div>
<svg style="left:1634px;top:118px" width="6" height="8" viewBox="0 0 6 8"><path d="M0.500 0.500L5 4 0.500 7.500z" fill="#e8e8e8"/></svg>
<div class="a" style="left:1425.5px;top:208px;width:248.5px;height:24.4px;background:#424242;"></div>
<div class="a" style="left:1425.5px;top:208px;width:65px;height:25.4px;background:#535353;"></div>
<div class="t" style="left:1433px;top:214.7px;font-size:8.6px;color:#f0f0f0;font-weight:bold;">Propiedades</div>
<div class="t" style="left:1498px;top:214.7px;font-size:8.6px;color:#a9a9a9;font-weight:bold;">Ajustes</div>
<svg style="left:1659px;top:216px" width="9" height="8" viewBox="0 0 9 8"><path d="M0.500 1.500h8M0.500 4h8M0.500 6.500h8" stroke="#c8c8c8" stroke-width="1.300"/></svg>
<div class="a" style="left:1490.5px;top:208px;width:1px;height:24px;background:#3a3a3a;"></div>
<div class="a" style="left:1537px;top:208px;width:1px;height:24px;background:#3a3a3a;"></div>
<div class="a" style="left:1425.5px;top:232px;width:248.5px;height:190px;background:#535353;"></div>
<div class="a" style="left:1435px;top:238px;width:18.500px;height:18.500px;background:#3b3b3b;border:1px solid #444"></div>
<svg style="left:1438px;top:241.500px" width="13" height="11" viewBox="0 0 13 11"><rect x="0.600" y="0.600" width="11.800" height="9.800" fill="none" stroke="#dcdcdc" stroke-width="1.200"/><path d="M2 9l3-4 2.500 2.500 1.500-1.500L11 9z" fill="#dcdcdc"/><circle cx="9.300" cy="3.300" r="1" fill="#dcdcdc"/></svg>
<div class="t" style="left:1459px;top:245.3px;font-size:8.4px;color:#cfd6e0;">Capa de píxeles</div>
<div class="a" style="left:1425.5px;top:261px;width:236px;height:1px;background:#484848;"></div>
<svg style="left:1431px;top:271px" width="8" height="6" viewBox="0 0 8 6"><path d="M0.800 1l3.200 3.500L7.200 1" fill="none" stroke="#bdbdbd" stroke-width="1.100"/></svg>
<div class="t" style="left:1445.5px;top:270px;font-size:9px;color:#ececec;font-weight:bold;">Transformar</div>
<div class="t" style="left:1463px;top:292px;font-size:8.2px;color:#d0d0d0;">An</div>
<div class="a" style="left:1478.5px;top:288px;width:46px;height:16px;background:#424242;border:1px solid #5e5e5e;border-radius:1.500px"></div>
<div class="t" style="left:1483.0px;top:292.7px;font-size:8.2px;color:#ececec;font-weight:bold;">2,09 pulg.</div>
<div class="t" style="left:1543px;top:292px;font-size:8.2px;color:#d0d0d0;">X</div>
<div class="a" style="left:1553.5px;top:288px;width:46px;height:16px;background:#424242;border:1px solid #5e5e5e;border-radius:1.500px"></div>
<div class="t" style="left:1558.0px;top:292.7px;font-size:8.2px;color:#ececec;font-weight:bold;">0,54 pulg.</div>
<div class="t" style="left:1466px;top:314px;font-size:8.2px;color:#d0d0d0;">Al</div>
<div class="a" style="left:1478.5px;top:310px;width:46px;height:16px;background:#424242;border:1px solid #5e5e5e;border-radius:1.500px"></div>
<div class="t" style="left:1483.0px;top:314.7px;font-size:8.2px;color:#ececec;font-weight:bold;">1,4 pulg.</div>
<div class="t" style="left:1543px;top:314px;font-size:8.2px;color:#d0d0d0;">Y</div>
<div class="a" style="left:1553.5px;top:310px;width:46px;height:16px;background:#424242;border:1px solid #5e5e5e;border-radius:1.500px"></div>
<div class="t" style="left:1558.0px;top:314.7px;font-size:8.2px;color:#ececec;font-weight:bold;">0,03 pulg.</div>
<div class="a" style="left:1432.500px;top:296px;width:21px;height:22px;background:#3b3b3b;border:1px solid #444;border-radius:1.500px"></div>
<svg style="left:1439px;top:300px" width="8" height="14" viewBox="0 0 8 14"><circle cx="4" cy="3.800" r="2.300" fill="none" stroke="#dcdcdc" stroke-width="1.300"/><circle cx="4" cy="10" r="2.300" fill="none" stroke="#dcdcdc" stroke-width="1.300"/><path d="M4 5v4" stroke="#dcdcdc" stroke-width="1.200"/></svg>
<svg style="left:1460px;top:337px" width="13" height="11" viewBox="0 0 13 11"><path d="M11.500 9.500H1.500L9 1.500" fill="none" stroke="#d4d4d4" stroke-width="1.200"/><path d="M6.500 9.500a4 4 0 0 0-1.800-3.300" fill="none" stroke="#d4d4d4" stroke-width="1"/></svg>
<div class="a" style="left:1478.5px;top:335px;width:46px;height:16px;background:#424242;border:1px solid #5e5e5e;border-radius:1.500px"></div>
<div class="t" style="left:1483.0px;top:339.7px;font-size:8.2px;color:#ececec;font-weight:bold;">0,00°</div>
<div class="a" style="left:1511px;top:336px;width:1px;height:14px;background:#5a5a5a;"></div>
<svg style="left:1513.5px;top:341px" width="8" height="6" viewBox="0 0 8 6"><path d="M0.800 1l3.200 3.500L7.200 1" fill="none" stroke="#bdbdbd" stroke-width="1.100"/></svg>
<svg style="left:1557px;top:337px" width="14" height="12" viewBox="0 0 14 12"><path d="M1 1.500v9l4-4.500z" fill="none" stroke="#d4d4d4" stroke-width="1"/><path d="M13 1.500v9l-4-4.500z" fill="#d4d4d4"/><path d="M7 0v12" stroke="#d4d4d4" stroke-width="0.900" stroke-dasharray="1.500 1.200"/></svg>
<svg style="left:1582px;top:336px" width="12" height="14" viewBox="0 0 12 14"><path d="M1.500 1h9L6 5z" fill="none" stroke="#d4d4d4" stroke-width="1" stroke-dasharray="1.200 1"/><path d="M1.500 13h9L6 9z" fill="#d4d4d4"/><path d="M0 7h12" stroke="#d4d4d4" stroke-width="0.900"/></svg>
<div class="a" style="left:1425.5px;top:362px;width:236px;height:1px;background:#484848;"></div>
<svg style="left:1431px;top:373px" width="8" height="6" viewBox="0 0 8 6"><path d="M0.800 1l3.200 3.500L7.200 1" fill="none" stroke="#bdbdbd" stroke-width="1.100"/></svg>
<div class="t" style="left:1446px;top:372px;font-size:9px;color:#ececec;font-weight:bold;">Alinear y distribuir</div>
<div class="t" style="left:1433px;top:391.5px;font-size:7.8px;color:#d0d0d0;">Alinear:</div>
<div class="a" style="left:1661px;top:262px;width:13px;height:160px;background:#515151;"></div>
<div class="a" style="left:1662px;top:277.5px;width:9.5px;height:53px;background:#6b6b6b;border-radius:1px;"></div>
<svg style="left:1663px;top:267px" width="8" height="6" viewBox="0 0 8 6"><path d="M0.800 5l3.200-3.500L7.200 5" fill="none" stroke="#9a9a9a" stroke-width="1.100"/></svg>
<svg style="left:1663px;top:388px" width="8" height="6" viewBox="0 0 8 6"><path d="M0.800 1l3.200 3.500L7.200 1" fill="none" stroke="#9a9a9a" stroke-width="1.100"/></svg>
<div class="a" style="left:1425.5px;top:424px;width:248.5px;height:24.4px;background:#424242;"></div>
<div class="a" style="left:1425.5px;top:424px;width:38.5px;height:25.4px;background:#535353;"></div>
<div class="t" style="left:1433px;top:430.7px;font-size:8.6px;color:#f0f0f0;font-weight:bold;">Capas</div>
<div class="t" style="left:1472px;top:430.7px;font-size:8.6px;color:#a9a9a9;font-weight:bold;">Canales</div>
<div class="t" style="left:1519px;top:430.7px;font-size:8.6px;color:#a9a9a9;font-weight:bold;">Trazados</div>
<svg style="left:1659px;top:432px" width="9" height="8" viewBox="0 0 9 8"><path d="M0.500 1.500h8M0.500 4h8M0.500 6.500h8" stroke="#c8c8c8" stroke-width="1.300"/></svg>
<div class="a" style="left:1464px;top:424px;width:1px;height:24px;background:#3a3a3a;"></div>
<div class="a" style="left:1511px;top:424px;width:1px;height:24px;background:#3a3a3a;"></div>
<div class="a" style="left:1565px;top:424px;width:1px;height:24px;background:#3a3a3a;"></div>
<div class="a" style="left:1425.5px;top:448px;width:248.5px;height:460px;background:#535353;"></div>
<div class="a" style="left:1429px;top:456px;width:93.500px;height:16.500px;background:#404040;border:1px solid #5a5a5a;border-radius:2px"></div>
<svg style="left:1435.500px;top:460px" width="9" height="9" viewBox="0 0 9 9"><circle cx="3.700" cy="3.700" r="2.700" fill="none" stroke="#e0e0e0" stroke-width="1.200"/><path d="M5.600 5.600L8.300 8.300" stroke="#e0e0e0" stroke-width="1.400"/></svg>
<div class="t" style="left:1448.5px;top:460.8px;font-size:8.4px;color:#ececec;">Tipo</div>
<svg style="left:1511px;top:462px" width="8" height="6" viewBox="0 0 8 6"><path d="M0.800 1l3.200 3.500L7.200 1" fill="none" stroke="#bdbdbd" stroke-width="1.100"/></svg>
<svg style="left:1541px;top:459px" width="11" height="10" viewBox="0 0 11 10"><rect x="0.600" y="0.600" width="9.800" height="8.300" rx="1" fill="none" stroke="#d8d8d8" stroke-width="1.100"/><path d="M2 7.500l2.300-3 1.700 1.800 1-1 1.800 2.200z" fill="#d8d8d8"/></svg>
<svg style="left:1563px;top:459px" width="10" height="10" viewBox="0 0 10 10"><circle cx="5" cy="5" r="4.200" fill="none" stroke="#d8d8d8" stroke-width="1.100"/><path d="M5 0.800a4.200 4.200 0 0 1 0 8.400z" fill="#d8d8d8" transform="rotate(45 5 5)"/></svg>
<div class="t" style="left:1584.5px;top:458px;font-size:11px;color:#e0e0e0;font-weight:bold;font-family:'Liberation Serif',serif;">T</div>
<svg style="left:1604.500px;top:459px" width="11" height="11" viewBox="0 0 11 11"><rect x="2" y="2" width="7" height="7" fill="none" stroke="#d8d8d8" stroke-width="1.100"/><g fill="#d8d8d8"><rect x="0.500" y="0.500" width="2.600" height="2.600"/><rect x="7.900" y="0.500" width="2.600" height="2.600"/><rect x="0.500" y="7.900" width="2.600" height="2.600"/><rect x="7.900" y="7.900" width="2.600" height="2.600"/></g></svg>
<svg style="left:1627px;top:458px" width="11" height="12" viewBox="0 0 11 12"><path d="M1.500 1h5l3 3v7h-8z" fill="none" stroke="#d8d8d8" stroke-width="1.100"/><path d="M4 6h5.500v5.500H4z" fill="#d8d8d8"/></svg>
<div class="a" style="left:1657.500px;top:455px;width:8px;height:15px;background:#3c3c3c;border-radius:4px"></div>
<div class="a" style="left:1657.500px;top:455px;width:8px;height:8px;background:#e8e8e8;border-radius:50%"></div>
<div class="a" style="left:1429px;top:480.500px;width:141.500px;height:16.500px;background:#404040;border:1px solid #5a5a5a;border-radius:2px"></div>
<div class="t" style="left:1436px;top:485.8px;font-size:8.2px;color:#ececec;">Normal</div>
<svg style="left:1560px;top:486.5px" width="8" height="6" viewBox="0 0 8 6"><path d="M0.800 1l3.200 3.500L7.200 1" fill="none" stroke="#bdbdbd" stroke-width="1.100"/></svg>
<div class="t" style="left:1576px;top:485.8px;font-size:8.2px;color:#d4d4d4;">Opacidad:</div>
<div class="a" style="left:1620px;top:480.5px;width:30.5px;height:16.5px;background:#424242;border:1px solid #5e5e5e;border-radius:1.500px"></div>
<div class="t" style="left:1624.5px;top:485.45px;font-size:8.2px;color:#ececec;font-weight:bold;">20%</div>
<div class="a" style="left:1650.500px;top:480.500px;width:14px;height:17px;background:#4a4a4a;border:1px solid #5e5e5e;border-radius:0 2px 2px 0"></div>
<svg style="left:1653.5px;top:486.5px" width="8" height="6" viewBox="0 0 8 6"><path d="M0.800 1l3.200 3.500L7.200 1" fill="none" stroke="#bdbdbd" stroke-width="1.100"/></svg>
<div class="t" style="left:1430px;top:509.5px;font-size:7.8px;color:#d4d4d4;">Bloq.:</div>
<svg style="left:1461px;top:508px" width="10" height="10" viewBox="0 0 10 10"><rect x="0.600" y="0.600" width="8.800" height="8.800" fill="none" stroke="#e0e0e0" stroke-width="1.100"/><g fill="#e0e0e0"><rect x="2" y="2" width="2" height="2"/><rect x="6" y="2" width="2" height="2"/><rect x="4" y="4" width="2" height="2"/><rect x="2" y="6" width="2" height="2"/><rect x="6" y="6" width="2" height="2"/></g></svg>
<svg style="left:1479px;top:507px" width="12" height="12" viewBox="0 0 12 12"><path d="M11 1L5.500 7" stroke="#e0e0e0" stroke-width="1.800" stroke-linecap="round"/><path d="M5 6.500l1.500 1.500c-0.500 2-2.500 3-5 2.700 1.200-0.700 1-1.800 1.500-2.800 0.500-0.900 1.200-1.300 2-1.400z" fill="#e0e0e0"/></svg>
<svg style="left:1498px;top:507px" width="12" height="12" viewBox="0 0 12 12"><path d="M6 0.500l2 2.300H6.700v2.500h2.500V4l2.300 2-2.300 2V6.700H6.700v2.500H8l-2 2.300-2-2.300h1.300V6.700H2.800V8L0.500 6l2.300-2v1.300h2.500V2.800H4z" fill="#e0e0e0"/></svg>
<svg style="left:1518px;top:507px" width="12" height="12" viewBox="0 0 12 12"><path d="M3 0.500v8.500h8.500M0.500 3h8.500v8.500" fill="none" stroke="#e0e0e0" stroke-width="1.200"/><path d="M8 1l3 3" stroke="#e0e0e0" stroke-width="1"/></svg>
<svg style="left:1538px;top:506.500px" width="10" height="12" viewBox="0 0 10 12"><path d="M2.800 5.500V3.500a2.200 2.200 0 0 1 4.400 0V5.500" fill="none" stroke="#e0e0e0" stroke-width="1.300"/><rect x="1" y="5.500" width="8" height="6" rx="0.800" fill="#e0e0e0"/></svg>
<div class="t" style="left:1586px;top:509.5px;font-size:7.8px;color:#d4d4d4;">Relleno:</div>
<div class="a" style="left:1620px;top:505px;width:30.5px;height:16.5px;background:#424242;border:1px solid #5e5e5e;border-radius:1.500px"></div>
<div class="t" style="left:1623.5px;top:510.05px;font-size:8px;color:#ececec;font-weight:bold;">100%</div>
<div class="a" style="left:1650.500px;top:505px;width:14px;height:17px;background:#4a4a4a;border:1px solid #5e5e5e;border-radius:0 2px 2px 0"></div>
<svg style="left:1653.5px;top:511px" width="8" height="6" viewBox="0 0 8 6"><path d="M0.800 1l3.200 3.500L7.200 1" fill="none" stroke="#bdbdbd" stroke-width="1.100"/></svg>
<div class="a" style="left:1425.5px;top:522px;width:26px;height:365px;background:#535353;"></div>
<div class="a" style="left:1450.8px;top:522px;width:1px;height:364px;background:#474747;"></div>
<div class="a" style="left:1425.5px;top:543.71px;width:235px;height:1px;background:#474747;"></div>
<svg style="left:1432.5px;top:527.5px" width="13" height="9" viewBox="0 0 13 9"><path d="M0.500 4.500C2.500 1.500 4.500 0.500 6.500 0.500S10.500 1.500 12.500 4.500C10.500 7.500 8.500 8.500 6.500 8.500S2.500 7.500 0.500 4.500z" fill="#e2e2e2"/><circle cx="6.500" cy="4.500" r="2.300" fill="#535353"/></svg>
<div class="a" style="left:1455px;top:525.0px;width:27.5px;height:13.5px;border:0.700px solid #8a8a8a;background:repeating-conic-gradient(#d2d2d2 0% 25%,#fff 0% 50%) 0 0/6.800px 6.800px"></div>
<div class="t" style="left:1490.4px;top:528.7px;font-size:8.2px;color:#ececec;font-weight:bold;">Capa 26</div>
<div class="a" style="left:1651px;top:520.29px;width:9px;height:23.42px;background:#4a4a4a;"></div>
<div class="t" style="left:1636.5px;top:526.5px;font-size:10px;color:#e0e0e0;font-style:italic;font-family:'Liberation Serif',serif;font-weight:bold;">fx</div>
<svg style="left:1651px;top:529.5px" width="8" height="6" viewBox="0 0 8 6"><path d="M0.800 1l3.200 3.500L7.200 1" fill="none" stroke="#9a9a9a" stroke-width="1.100"/></svg>
<div class="a" style="left:1425.5px;top:568.13px;width:235px;height:1px;background:#474747;"></div>
<svg style="left:1432.5px;top:551.92px" width="13" height="9" viewBox="0 0 13 9"><path d="M0.500 4.500C2.500 1.500 4.500 0.500 6.500 0.500S10.500 1.500 12.500 4.500C10.500 7.500 8.500 8.500 6.500 8.500S2.500 7.500 0.500 4.500z" fill="#e2e2e2"/><circle cx="6.500" cy="4.500" r="2.300" fill="#535353"/></svg>
<div class="a" style="left:1455px;top:549.42px;width:27.5px;height:13.5px;border:0.700px solid #8a8a8a;background:repeating-conic-gradient(#d2d2d2 0% 25%,#fff 0% 50%) 0 0/6.800px 6.800px"></div>
<div class="t" style="left:1490.4px;top:553.12px;font-size:8.2px;color:#ececec;font-weight:bold;">Capa 22</div>
<div class="a" style="left:1651px;top:544.7099999999999px;width:9px;height:23.42px;background:#4a4a4a;"></div>
<div class="t" style="left:1636.5px;top:550.92px;font-size:10px;color:#e0e0e0;font-style:italic;font-family:'Liberation Serif',serif;font-weight:bold;">fx</div>
<svg style="left:1651px;top:553.92px" width="8" height="6" viewBox="0 0 8 6"><path d="M0.800 1l3.200 3.500L7.200 1" fill="none" stroke="#9a9a9a" stroke-width="1.100"/></svg>
<div class="a" style="left:1425.5px;top:592.5500000000001px;width:235px;height:1px;background:#474747;"></div>
<svg style="left:1432.5px;top:576.34px" width="13" height="9" viewBox="0 0 13 9"><path d="M0.500 4.500C2.500 1.500 4.500 0.500 6.500 0.500S10.500 1.500 12.500 4.500C10.500 7.500 8.500 8.500 6.500 8.500S2.500 7.500 0.500 4.500z" fill="#e2e2e2"/><circle cx="6.500" cy="4.500" r="2.300" fill="#535353"/></svg>
<div class="a" style="left:1455px;top:573.84px;width:27.5px;height:13.5px;border:0.700px solid #8a8a8a;background:repeating-conic-gradient(#d2d2d2 0% 25%,#fff 0% 50%) 0 0/6.800px 6.800px"></div>
<div class="t" style="left:1490.4px;top:577.5400000000001px;font-size:8.2px;color:#ececec;font-weight:bold;">#GenesisFlare</div>
<div class="a" style="left:1651px;top:569.13px;width:9px;height:23.42px;background:#4a4a4a;"></div>
<div class="t" style="left:1636.5px;top:575.34px;font-size:10px;color:#e0e0e0;font-style:italic;font-family:'Liberation Serif',serif;font-weight:bold;">fx</div>
<svg style="left:1651px;top:578.34px" width="8" height="6" viewBox="0 0 8 6"><path d="M0.800 1l3.200 3.500L7.200 1" fill="none" stroke="#9a9a9a" stroke-width="1.100"/></svg>
<div class="a" style="left:1425.5px;top:616.97px;width:235px;height:1px;background:#474747;"></div>
<div class="a" style="left:1452px;top:593.55px;width:208px;height:23.42px;background:#5a5a5a;"></div>
<svg style="left:1432.5px;top:600.76px" width="13" height="9" viewBox="0 0 13 9"><path d="M0.500 4.500C2.500 1.500 4.500 0.500 6.500 0.500S10.500 1.500 12.500 4.500C10.500 7.500 8.500 8.500 6.500 8.500S2.500 7.500 0.500 4.500z" fill="#e2e2e2"/><circle cx="6.500" cy="4.500" r="2.300" fill="#535353"/></svg>
<div class="a" style="left:1455px;top:598.26px;width:27.5px;height:13.5px;border:0.700px solid #8a8a8a;background:repeating-conic-gradient(#d2d2d2 0% 25%,#fff 0% 50%) 0 0/6.800px 6.800px"></div>
<div class="t" style="left:1490.4px;top:601.96px;font-size:8.2px;color:#ececec;font-weight:bold;">Y 2</div>
<div class="a" style="left:1425.5px;top:641.3900000000001px;width:235px;height:1px;background:#474747;"></div>
<svg style="left:1432.5px;top:625.1800000000001px" width="13" height="9" viewBox="0 0 13 9"><path d="M0.500 4.500C2.500 1.500 4.500 0.500 6.500 0.500S10.500 1.500 12.500 4.500C10.500 7.500 8.500 8.500 6.500 8.500S2.500 7.500 0.500 4.500z" fill="#e2e2e2"/><circle cx="6.500" cy="4.500" r="2.300" fill="#535353"/></svg>
<div class="a" style="left:1455px;top:622.6800000000001px;width:27.5px;height:13.5px;border:0.700px solid #8a8a8a;background:repeating-conic-gradient(#d2d2d2 0% 25%,#fff 0% 50%) 0 0/6.800px 6.800px"></div>
<div class="t" style="left:1490.4px;top:626.3800000000001px;font-size:8.2px;color:#ececec;font-weight:bold;">#GenesisFlare</div>
<div class="a" style="left:1651px;top:617.97px;width:9px;height:23.42px;background:#4a4a4a;"></div>
<div class="t" style="left:1636.5px;top:624.1800000000001px;font-size:10px;color:#e0e0e0;font-style:italic;font-family:'Liberation Serif',serif;font-weight:bold;">fx</div>
<svg style="left:1651px;top:627.1800000000001px" width="8" height="6" viewBox="0 0 8 6"><path d="M0.800 1l3.200 3.500L7.200 1" fill="none" stroke="#9a9a9a" stroke-width="1.100"/></svg>
<div class="a" style="left:1425.5px;top:665.8100000000001px;width:235px;height:1px;background:#474747;"></div>
<svg style="left:1432.5px;top:649.6px" width="13" height="9" viewBox="0 0 13 9"><path d="M0.500 4.500C2.500 1.500 4.500 0.500 6.500 0.500S10.500 1.500 12.500 4.500C10.500 7.500 8.500 8.500 6.500 8.500S2.500 7.500 0.500 4.500z" fill="#e2e2e2"/><circle cx="6.500" cy="4.500" r="2.300" fill="#535353"/></svg>
<div class="a" style="left:1455px;top:647.1px;width:27.5px;height:13.5px;border:0.700px solid #8a8a8a;background:repeating-conic-gradient(#d2d2d2 0% 25%,#fff 0% 50%) 0 0/6.800px 6.800px"></div>
<div class="t" style="left:1490.4px;top:650.8000000000001px;font-size:8.2px;color:#ececec;font-weight:bold;">#GenesisFlare</div>
<div class="a" style="left:1651px;top:642.39px;width:9px;height:23.42px;background:#4a4a4a;"></div>
<div class="t" style="left:1636.5px;top:648.6px;font-size:10px;color:#e0e0e0;font-style:italic;font-family:'Liberation Serif',serif;font-weight:bold;">fx</div>
<svg style="left:1651px;top:651.6px" width="8" height="6" viewBox="0 0 8 6"><path d="M0.800 1l3.200 3.500L7.200 1" fill="none" stroke="#9a9a9a" stroke-width="1.100"/></svg>
<div class="a" style="left:1425.5px;top:690.23px;width:235px;height:1px;background:#474747;"></div>
<svg style="left:1432.5px;top:674.02px" width="13" height="9" viewBox="0 0 13 9"><path d="M0.500 4.500C2.500 1.500 4.500 0.500 6.500 0.500S10.500 1.500 12.500 4.500C10.500 7.500 8.500 8.500 6.500 8.500S2.500 7.500 0.500 4.500z" fill="#e2e2e2"/><circle cx="6.500" cy="4.500" r="2.300" fill="#535353"/></svg>
<div class="a" style="left:1455px;top:671.52px;width:27.5px;height:13.5px;border:0.700px solid #8a8a8a;background:repeating-conic-gradient(#d2d2d2 0% 25%,#fff 0% 50%) 0 0/6.800px 6.800px"></div>
<div class="t" style="left:1490.4px;top:675.22px;font-size:8.2px;color:#ececec;font-weight:bold;">Capa 32</div>
<div class="a" style="left:1651px;top:666.81px;width:9px;height:23.42px;background:#4a4a4a;"></div>
<div class="t" style="left:1636.5px;top:673.02px;font-size:10px;color:#e0e0e0;font-style:italic;font-family:'Liberation Serif',serif;font-weight:bold;">fx</div>
<svg style="left:1651px;top:676.02px" width="8" height="6" viewBox="0 0 8 6"><path d="M0.800 1l3.200 3.500L7.200 1" fill="none" stroke="#9a9a9a" stroke-width="1.100"/></svg>
<div class="a" style="left:1425.5px;top:714.6500000000001px;width:235px;height:1px;background:#474747;"></div>
<svg style="left:1432.5px;top:698.44px" width="13" height="9" viewBox="0 0 13 9"><path d="M0.500 4.500C2.500 1.500 4.500 0.500 6.500 0.500S10.500 1.500 12.500 4.500C10.500 7.500 8.500 8.500 6.500 8.500S2.500 7.500 0.500 4.500z" fill="#e2e2e2"/><circle cx="6.500" cy="4.500" r="2.300" fill="#535353"/></svg>
<div class="a" style="left:1455px;top:695.94px;width:27.5px;height:13.5px;border:0.700px solid #8a8a8a;background:repeating-conic-gradient(#d2d2d2 0% 25%,#fff 0% 50%) 0 0/6.800px 6.800px"></div>
<div class="t" style="left:1490.4px;top:699.6400000000001px;font-size:8.2px;color:#ececec;font-weight:bold;">#GenesisFlare</div>
<div class="a" style="left:1651px;top:691.23px;width:9px;height:23.42px;background:#4a4a4a;"></div>
<div class="t" style="left:1636.5px;top:697.44px;font-size:10px;color:#e0e0e0;font-style:italic;font-family:'Liberation Serif',serif;font-weight:bold;">fx</div>
<svg style="left:1651px;top:700.44px" width="8" height="6" viewBox="0 0 8 6"><path d="M0.800 1l3.200 3.500L7.200 1" fill="none" stroke="#9a9a9a" stroke-width="1.100"/></svg>
<div class="a" style="left:1425.5px;top:739.07px;width:235px;height:1px;background:#474747;"></div>
<svg style="left:1432.5px;top:722.86px" width="13" height="9" viewBox="0 0 13 9"><path d="M0.500 4.500C2.500 1.500 4.500 0.500 6.500 0.500S10.500 1.500 12.500 4.500C10.500 7.500 8.500 8.500 6.500 8.500S2.500 7.500 0.500 4.500z" fill="#e2e2e2"/><circle cx="6.500" cy="4.500" r="2.300" fill="#535353"/></svg>
<div class="a" style="left:1455px;top:720.36px;width:27.5px;height:13.5px;border:0.700px solid #8a8a8a;background:repeating-conic-gradient(#d2d2d2 0% 25%,#fff 0% 50%) 0 0/6.800px 6.800px"></div>
<div class="t" style="left:1490.4px;top:724.0600000000001px;font-size:8.2px;color:#ececec;font-weight:bold;">#GenesisFlare</div>
<div class="a" style="left:1651px;top:715.65px;width:9px;height:23.42px;background:#4a4a4a;"></div>
<div class="t" style="left:1636.5px;top:721.86px;font-size:10px;color:#e0e0e0;font-style:italic;font-family:'Liberation Serif',serif;font-weight:bold;">fx</div>
<svg style="left:1651px;top:724.86px" width="8" height="6" viewBox="0 0 8 6"><path d="M0.800 1l3.200 3.500L7.200 1" fill="none" stroke="#9a9a9a" stroke-width="1.100"/></svg>
<div class="a" style="left:1452px;top:740.0699999999999px;width:209px;height:23.42px;background:#6a6a6a;"></div>
<div class="a" style="left:1425.5px;top:763.49px;width:235px;height:1px;background:#474747;"></div>
<svg style="left:1432.5px;top:747.28px" width="13" height="9" viewBox="0 0 13 9"><path d="M0.500 4.500C2.500 1.500 4.500 0.500 6.500 0.500S10.500 1.500 12.500 4.500C10.500 7.500 8.500 8.500 6.500 8.500S2.500 7.500 0.500 4.500z" fill="#e2e2e2"/><circle cx="6.500" cy="4.500" r="2.300" fill="#535353"/></svg>
<svg style="left:1460px;top:746.78px" width="7" height="10" viewBox="0 0 7 10"><path d="M5.500 1H2.500V7.500" fill="none" stroke="#d0d0d0" stroke-width="1"/><path d="M0.500 6l2 3 2-3z" fill="#d0d0d0"/></svg>
<div class="a" style="left:1468px;top:743.28px;width:31px;height:17px;background:#0c0c0c;border:1.500px solid #f4f4f4;outline:1px solid #222"></div>
<div class="a" style="left:1470px;top:744.78px;width:6px;height:14px;background:#e8e8e8"></div>
<div class="t" style="left:1505px;top:748.48px;font-size:8.2px;color:#ececec;font-weight:bold;">killoxs</div>
<svg style="left:1432.5px;top:771.7px" width="13" height="9" viewBox="0 0 13 9"><path d="M0.500 4.500C2.500 1.500 4.500 0.500 6.500 0.500S10.500 1.500 12.500 4.500C10.500 7.500 8.500 8.500 6.500 8.500S2.500 7.500 0.500 4.500z" fill="#e2e2e2"/><circle cx="6.500" cy="4.500" r="2.300" fill="#535353"/></svg>
<div class="a" style="left:1455px;top:769.2px;width:27.5px;height:13.5px;border:0.700px solid #8a8a8a;background:repeating-conic-gradient(#d2d2d2 0% 25%,#fff 0% 50%) 0 0/6.800px 6.800px"></div>
<div class="t" style="left:1490.4px;top:772.9000000000001px;font-size:8.2px;color:#ececec;font-weight:bold;text-decoration:underline;">Capa 33&nbsp;</div>
<div class="a" style="left:1651px;top:764.49px;width:9px;height:23.42px;background:#4a4a4a;"></div>
<div class="t" style="left:1636.5px;top:770.7px;font-size:10px;color:#e0e0e0;font-style:italic;font-family:'Liberation Serif',serif;font-weight:bold;">fx</div>
<svg style="left:1651px;top:773.7px" width="8" height="6" viewBox="0 0 8 6"><path d="M0.800 5l3.200-3.500L7.200 5" fill="none" stroke="#9a9a9a" stroke-width="1.100"/></svg>
<svg style="left:1468.5px;top:792.0px" width="11" height="7" viewBox="0 0 13 9"><path d="M0.500 4.500C2.500 1.500 4.500 0.500 6.500 0.500S10.500 1.500 12.500 4.500C10.500 7.500 8.500 8.500 6.500 8.500S2.500 7.500 0.500 4.500z" fill="#e2e2e2"/><circle cx="6.500" cy="4.500" r="2.300" fill="#535353"/></svg>
<div class="t" style="left:1485px;top:790.5px;font-size:7.8px;color:#e6e6e6;font-weight:bold;">Efectos</div>
<div class="t" style="left:1499px;top:807px;font-size:7.8px;color:#e6e6e6;font-weight:bold;">Bisel y relieve</div>
<svg style="left:1483.5px;top:825.0px" width="11" height="7" viewBox="0 0 13 9"><path d="M0.500 4.500C2.500 1.500 4.500 0.500 6.500 0.500S10.500 1.500 12.500 4.500C10.500 7.500 8.500 8.500 6.500 8.500S2.500 7.500 0.500 4.500z" fill="#e2e2e2"/><circle cx="6.500" cy="4.500" r="2.300" fill="#535353"/></svg>
<div class="t" style="left:1499px;top:823.5px;font-size:8.1px;color:#e6e6e6;font-weight:bold;">Superposición de degradado</div>
<div class="a" style="left:1425.5px;top:837.5px;width:235px;height:1px;background:#474747;"></div>
<svg style="left:1432.5px;top:845.5px" width="13" height="9" viewBox="0 0 13 9"><path d="M0.500 4.500C2.500 1.500 4.500 0.500 6.500 0.500S10.500 1.500 12.500 4.500C10.500 7.500 8.500 8.500 6.500 8.500S2.500 7.500 0.500 4.500z" fill="#e2e2e2"/><circle cx="6.500" cy="4.500" r="2.300" fill="#535353"/></svg>
<svg style="left:1460px;top:845px" width="7" height="10" viewBox="0 0 7 10"><path d="M5.500 1H2.500V7.500" fill="none" stroke="#d0d0d0" stroke-width="1"/><path d="M0.500 6l2 3 2-3z" fill="#d0d0d0"/></svg>
<div class="a" style="left:1468.500px;top:842.5px;width:28.500px;height:15px;background:#161616;border:0.700px solid #777"></div>
<div class="a" style="left:1490.500px;top:843px;width:6px;height:14px;background:#e4e4e4"></div>
<div class="t" style="left:1505px;top:846.7px;font-size:8.2px;color:#ececec;font-weight:bold;">killoxs</div>
<div class="a" style="left:1425.5px;top:862px;width:235px;height:1px;background:#474747;"></div>
<svg style="left:1432.5px;top:870.0px" width="13" height="9" viewBox="0 0 13 9"><path d="M0.500 4.500C2.500 1.500 4.500 0.500 6.500 0.500S10.500 1.500 12.500 4.500C10.500 7.500 8.500 8.500 6.500 8.500S2.500 7.500 0.500 4.500z" fill="#e2e2e2"/><circle cx="6.500" cy="4.500" r="2.300" fill="#535353"/></svg>
<div class="a" style="left:1455px;top:867.5px;width:27.5px;height:13.5px;border:0.700px solid #8a8a8a;background:repeating-conic-gradient(#d2d2d2 0% 25%,#fff 0% 50%) 0 0/6.800px 6.800px"></div>
<div class="t" style="left:1490.4px;top:871.2px;font-size:8.2px;color:#ececec;font-weight:bold;text-decoration:underline;">Capa 11&nbsp;</div>
<div class="a" style="left:1651px;top:862.79px;width:9px;height:23.42px;background:#4a4a4a;"></div>
<div class="t" style="left:1636.5px;top:869.0px;font-size:10px;color:#e0e0e0;font-style:italic;font-family:'Liberation Serif',serif;font-weight:bold;">fx</div>
<svg style="left:1651px;top:872.0px" width="8" height="6" viewBox="0 0 8 6"><path d="M0.800 1l3.200 3.500L7.200 1" fill="none" stroke="#9a9a9a" stroke-width="1.100"/></svg>
<div class="a" style="left:1660px;top:522px;width:14px;height:364px;background:#4e4e4e;"></div>
<div class="a" style="left:1662.5px;top:637px;width:9px;height:130px;background:#6a6a6a;border-radius:1px;"></div>
<svg style="left:1663px;top:532px" width="8" height="6" viewBox="0 0 8 6"><path d="M0.800 5l3.200-3.500L7.200 5" fill="none" stroke="#9a9a9a" stroke-width="1.100"/></svg>
<svg style="left:1663px;top:873px" width="8" height="6" viewBox="0 0 8 6"><path d="M0.800 1l3.200 3.500L7.200 1" fill="none" stroke="#9a9a9a" stroke-width="1.100"/></svg>
<div class="a" style="left:1425.5px;top:886px;width:248.5px;height:22px;background:#535353;"></div>
<div class="a" style="left:1425.5px;top:885.5px;width:248.5px;height:1px;background:#464646;"></div>
<svg style="left:1496px;top:892px" width="13" height="9" viewBox="0 0 13 9"><rect x="0.700" y="2" width="6.500" height="5" rx="2.500" fill="none" stroke="#8a8a8a" stroke-width="1.200"/><rect x="5.800" y="2" width="6.500" height="5" rx="2.500" fill="none" stroke="#8a8a8a" stroke-width="1.200"/></svg>
<div class="t" style="left:1522px;top:890.5px;font-size:10.5px;color:#e0e0e0;font-style:italic;font-family:'Liberation Serif',serif;font-weight:bold;">fx</div>
<svg style="left:1543.500px;top:891px" width="12" height="10" viewBox="0 0 12 10"><rect x="0.500" y="0.500" width="11" height="9" rx="1" fill="#dcdcdc"/><circle cx="6" cy="5" r="2.700" fill="#535353"/></svg>
<svg style="left:1568.500px;top:891px" width="11" height="11" viewBox="0 0 11 11"><circle cx="5.500" cy="5.500" r="4.600" fill="none" stroke="#dcdcdc" stroke-width="1.200"/><path d="M5.500 0.900a4.600 4.600 0 0 1 0 9.200z" fill="#dcdcdc" transform="rotate(45 5.500 5.500)"/></svg>
<svg style="left:1591px;top:891px" width="13" height="10" viewBox="0 0 13 10"><path d="M0.500 0.500h4.500l1.200 1.500h6.300v7.500h-12z" fill="#dcdcdc"/></svg>
<svg style="left:1615.500px;top:890.500px" width="11" height="11" viewBox="0 0 11 11"><rect x="0.600" y="0.600" width="9.800" height="9.800" rx="1" fill="none" stroke="#dcdcdc" stroke-width="1.200"/><path d="M5.500 3v5M3 5.500h5" stroke="#dcdcdc" stroke-width="1.200"/></svg>
<svg style="left:1639px;top:890px" width="10" height="12" viewBox="0 0 10 12"><path d="M0.500 2.500h9M3.500 2.500v-1.500h3v1.500" fill="none" stroke="#dcdcdc" stroke-width="1.100"/><path d="M1.500 4h7l-0.600 7.500h-5.800z" fill="#dcdcdc"/></svg>
<div class="a" style="left:0px;top:907.5px;width:1674px;height:36.5px;background:#1c1c1c;"></div>
<div class="a" style="left:0px;top:943px;width:1674px;height:1px;background:#050505;"></div>
<svg style="left:11px;top:918px" width="16" height="16" viewBox="0 0 16 16"><path d="M0 2.300L6.500 1.400V7.600H0zM7.300 1.300L16 0V7.600H7.300zM0 8.400H6.500V14.600L0 13.700zM7.300 8.400H16V16L7.300 14.700z" fill="#fff"/></svg>
<div class="a" style="left:40px;top:908px;width:299px;height:36px;background:#f3f3f3;"></div>
<svg style="left:50px;top:918px" width="16" height="16" viewBox="0 0 16 16"><circle cx="9.500" cy="6" r="4.700" fill="none" stroke="#333" stroke-width="1.300"/><path d="M6.200 9.500L1 15" stroke="#333" stroke-width="1.400"/></svg>
<div class="t" style="left:75px;top:919.5px;font-size:12.6px;color:#3a3a3a;">Escribe aquí para buscar</div>
<svg style="left:353px;top:918px" width="16" height="16" viewBox="0 0 16 16"><circle cx="8" cy="8" r="5.800" fill="none" stroke="#fff" stroke-width="1.800"/></svg>
<svg style="left:394px;top:917px" width="18" height="18" viewBox="0 0 18 18"><g fill="none" stroke="#fff" stroke-width="1.300"><path d="M2 1.500h11M2 16.500h11M3.500 4.500h8v9h-8zM15.500 3v5M15.500 10.500v4.500"/><path d="M14 9h3"/></g></svg>
<svg style="left:437px;top:917px" width="21" height="18" viewBox="0 0 24 22"><rect x="1" y="2" width="22" height="17" rx="1" fill="#2d7fd1"/><rect x="2.500" y="3.500" width="19" height="14" fill="#9fd0f4"/><rect x="4" y="5" width="6" height="6" fill="#e8f4ff"/><rect x="11.500" y="5" width="8" height="2.500" fill="#3d8ad8"/><rect x="11.500" y="9" width="8" height="6.500" fill="#5aa5e8"/><rect x="4" y="12.500" width="6" height="3" fill="#3d8ad8"/></svg>
<svg style="left:478px;top:914px" width="24" height="24" viewBox="0 0 24 24"><circle cx="12" cy="12" r="10.500" fill="#fbc116"/><path d="M12 12L2.900 6.750A10.500 10.500 0 0 1 21.100 6.750z" fill="#e33b2e"/><path d="M12 12L2.900 6.750A10.500 10.500 0 0 0 12 22.500l4.500-8z" fill="#2da94f"/><path d="M12 7.200h9.300A10.500 10.500 0 0 0 2.900 6.750L7.800 14z" fill="#e33b2e"/><circle cx="12" cy="12" r="4.800" fill="#f1f1f1"/><circle cx="12" cy="12" r="3.800" fill="#4a8af4"/></svg>
<svg style="left:519px;top:915px" width="26" height="22" viewBox="0 0 26 22"><path d="M1.500 3h8l2 2.500h13V20h-23z" fill="#f5c33b"/><path d="M1.500 7.500h23V20h-23z" fill="#fbd968"/><rect x="7" y="12" width="12" height="8" fill="#3f9be0"/><rect x="9" y="14" width="8" height="6" fill="#fbd968"/><rect x="10.500" y="15.500" width="5" height="4.500" fill="#3f9be0"/></svg>
<svg style="left:563px;top:914px" width="24" height="24" viewBox="0 0 24 24"><path d="M12 1.500L22 6.500V17.500L12 22.500L2 17.500V6.500z" fill="#7a5237"/><path d="M12 1.500L22 6.500L12 11.500L2 6.500z" fill="#6aa83f"/><path d="M2 6.500L12 11.500V14L2 9z" fill="#4f8a2d"/><path d="M22 6.500L12 11.500V14L22 9z" fill="#3f7424"/><path d="M12 14V22.500L22 17.500V9z" fill="#5b3b27"/></svg>
<svg style="left:606px;top:914px" width="24" height="24" viewBox="0 0 24 24"><circle cx="12" cy="12" r="10.500" fill="#2a2a2a" stroke="#d0d0d0" stroke-width="1.400"/><g fill="none" stroke="#d0d0d0" stroke-width="1.400"><path d="M12 12c-1-3 0-6 3-7.500"/><path d="M12 12c3 0.700 5 3 5 6.500"/><path d="M12 12c-2.500 2-5.500 2-8 0"/></g><circle cx="12" cy="12" r="2" fill="#d0d0d0"/></svg>
<svg style="left:649px;top:914px" width="26" height="24" viewBox="0 0 26 24"><rect x="1.500" y="3" width="20" height="16" rx="4" fill="#7a8be0"/><path d="M5 8c3-2 10-2 13 0l1.500 7c-2 2-4 2.500-5 2l-0.800-1.500c-1.500 0.400-3 0.400-4.400 0L8.500 17c-1 0.500-3 0-5-2z" fill="#fff"/><circle cx="9" cy="12" r="1.600" fill="#7a8be0"/><circle cx="14.200" cy="12" r="1.600" fill="#7a8be0"/><circle cx="18.500" cy="17.500" r="5.500" fill="#e8232b"/></svg>
<div class="t" style="left:665.5px;top:926.5px;font-size:9px;color:#fff;font-weight:bold;">1</div>
<svg style="left:692px;top:914px" width="24" height="24" viewBox="0 0 24 24"><circle cx="12" cy="12" r="10.500" fill="#27486e" stroke="#6fa3d8" stroke-width="1.400"/><path d="M6 14v-2.500a6 6 0 0 1 12 0V14" fill="none" stroke="#e8f0fa" stroke-width="1.800"/><rect x="4.800" y="12" width="3.400" height="5" rx="1" fill="#e8f0fa"/><rect x="15.800" y="12" width="3.400" height="5" rx="1" fill="#e8f0fa"/><path d="M17.500 17c0 2-2 2.500-5 2.500" fill="none" stroke="#e8f0fa" stroke-width="1.200"/></svg>
<svg style="left:736px;top:913px" width="22" height="26" viewBox="0 0 22 26"><path d="M2 1.500h18v18.500l-9 4.500-9-4.500z" fill="#1a1a1a" stroke="#d8d8d8" stroke-width="1"/></svg>
<div class="t" style="left:739.5px;top:917px;font-size:6.5px;color:#f2f2f2;font-weight:bold;letter-spacing:-0.300px;transform:scaleY(1.350);">EPIC</div>
<div class="a" style="left:741px;top:929px;width:12px;height:1px;background:#bdbdbd;"></div>
<div class="a" style="left:743px;top:931.5px;width:8px;height:1px;background:#9a9a9a;"></div>
<div class="a" style="left:769px;top:908px;width:42px;height:36px;background:#3c3c3c;"></div>
<div class="a" style="left:779px;top:914.500px;width:22px;height:21px;background:#0a1f33;border:1.500px solid #35b5e8;border-radius:3px"></div>
<div class="t" style="left:783px;top:919.5px;font-size:11.5px;color:#7fd6ff;font-weight:bold;">Ps</div>
<div class="a" style="left:473px;top:942px;width:34px;height:1.5px;background:#6fa9d8;"></div>
<div class="a" style="left:515px;top:942px;width:35px;height:1.5px;background:#6fa9d8;"></div>
<div class="a" style="left:644px;top:942px;width:35px;height:1.5px;background:#6fa9d8;"></div>
<div class="a" style="left:687px;top:942px;width:35px;height:1.5px;background:#6fa9d8;"></div>
<div class="a" style="left:730px;top:942px;width:35px;height:1.5px;background:#6fa9d8;"></div>
<div class="a" style="left:769px;top:942px;width:42px;height:1.5px;background:#6fa9d8;"></div>
<svg style="left:1455px;top:921px" width="14" height="9" viewBox="0 0 14 9"><path d="M1.500 7.500l5.500-5.500L12.500 7.500" fill="none" stroke="#f0f0f0" stroke-width="1.300"/></svg>
<svg style="left:1476px;top:917px" width="14" height="18" viewBox="0 0 14 18"><rect x="3.600" y="1" width="6.200" height="10.500" rx="3" fill="#ececec"/><path d="M2 9.500a4.800 4.800 0 0 0 9.400 0M6.700 14v1.500M3.800 16h6" fill="none" stroke="#ececec" stroke-width="1.100"/></svg>
<svg style="left:1496px;top:918px" width="18" height="16" viewBox="0 0 18 16"><rect x="5" y="2.500" width="10.500" height="7.500" fill="none" stroke="#ececec" stroke-width="1.100"/><path d="M8 12.500h6M11 10v2.500" stroke="#ececec" stroke-width="1.100"/><path d="M2.500 1.500v11.500h3.500" fill="none" stroke="#ececec" stroke-width="1.100"/><path d="M1 3.500h3" stroke="#ececec" stroke-width="1.100"/><rect x="6.500" y="11.500" width="2" height="2" fill="#ececec"/></svg>
<svg style="left:1517px;top:918px" width="18" height="16" viewBox="0 0 18 16"><path d="M1.500 5.500h2.500l3.500-3v11l-3.500-3h-2.500z" fill="none" stroke="#ececec" stroke-width="1.100"/><path d="M10 5.500a3 3 0 0 1 0 5M12 3.800a5.500 5.500 0 0 1 0 8.400M14 2.300a8 8 0 0 1 0 11.400" fill="none" stroke="#ececec" stroke-width="1"/></svg>
<div class="t" style="left:1542.8px;top:921px;font-size:10px;color:#f4f4f4;transform:scaleX(0.840);">ESP</div>
<div class="t" style="left:1584.8px;top:912.5px;font-size:10.3px;color:#f4f4f4;transform:scaleX(0.920);">20:40</div>
<div class="t" style="left:1572px;top:927.8px;font-size:10.3px;color:#f4f4f4;transform:scaleX(0.970);">22/04/2020</div>
<svg style="left:1630px;top:898px" width="44" height="46" viewBox="0 0 44 46"><path d="M9 21.500h13v11h-8l-3 3v-3H9z" fill="#d8d8d8"/><path d="M11 24.500h8M11 27h8M11 29.500h5" stroke="#1c1c1c" stroke-width="1"/><circle cx="20.500" cy="19" r="15.500" fill="#161616" opacity="0.960"/><path d="M9.500 22v10.500h2.500v2.500l2.500-2.500h2" fill="none" stroke="#d8d8d8" stroke-width="1.600" opacity="0.900"/><rect x="17.300" y="10" width="5.400" height="9.500" rx="2.700" fill="#f4f4f4"/><path d="M15.300 18a4.800 4.800 0 0 0 9.400 0" fill="none" stroke="#f4f4f4" stroke-width="1.300"/><path d="M20 23v2.500" stroke="#f4f4f4" stroke-width="1.300"/><path d="M11.500 29.500L28.500 12" stroke="#161616" stroke-width="4"/><path d="M11.500 29.500L28.500 12.500" stroke="#ffffff" stroke-width="1.700"/><path d="M14.500 29.500L27 16.500" stroke="#ffffff" stroke-width="1.300"/><circle cx="22" cy="34" r="6.500" fill="#1c1c1c" stroke="#8a8a8a" stroke-width="1"/></svg>
<div class="t" style="left:1649.3px;top:927.5px;font-size:9px;color:#e8e8e8;">2</div>
<div class="a" style="left:1670px;top:940px;width:4px;height:4px;background:radial-gradient(circle at 0 0,rgba(0,0,0,0) 3.300px,#050505 4px)"></div>
</div></body></html>
